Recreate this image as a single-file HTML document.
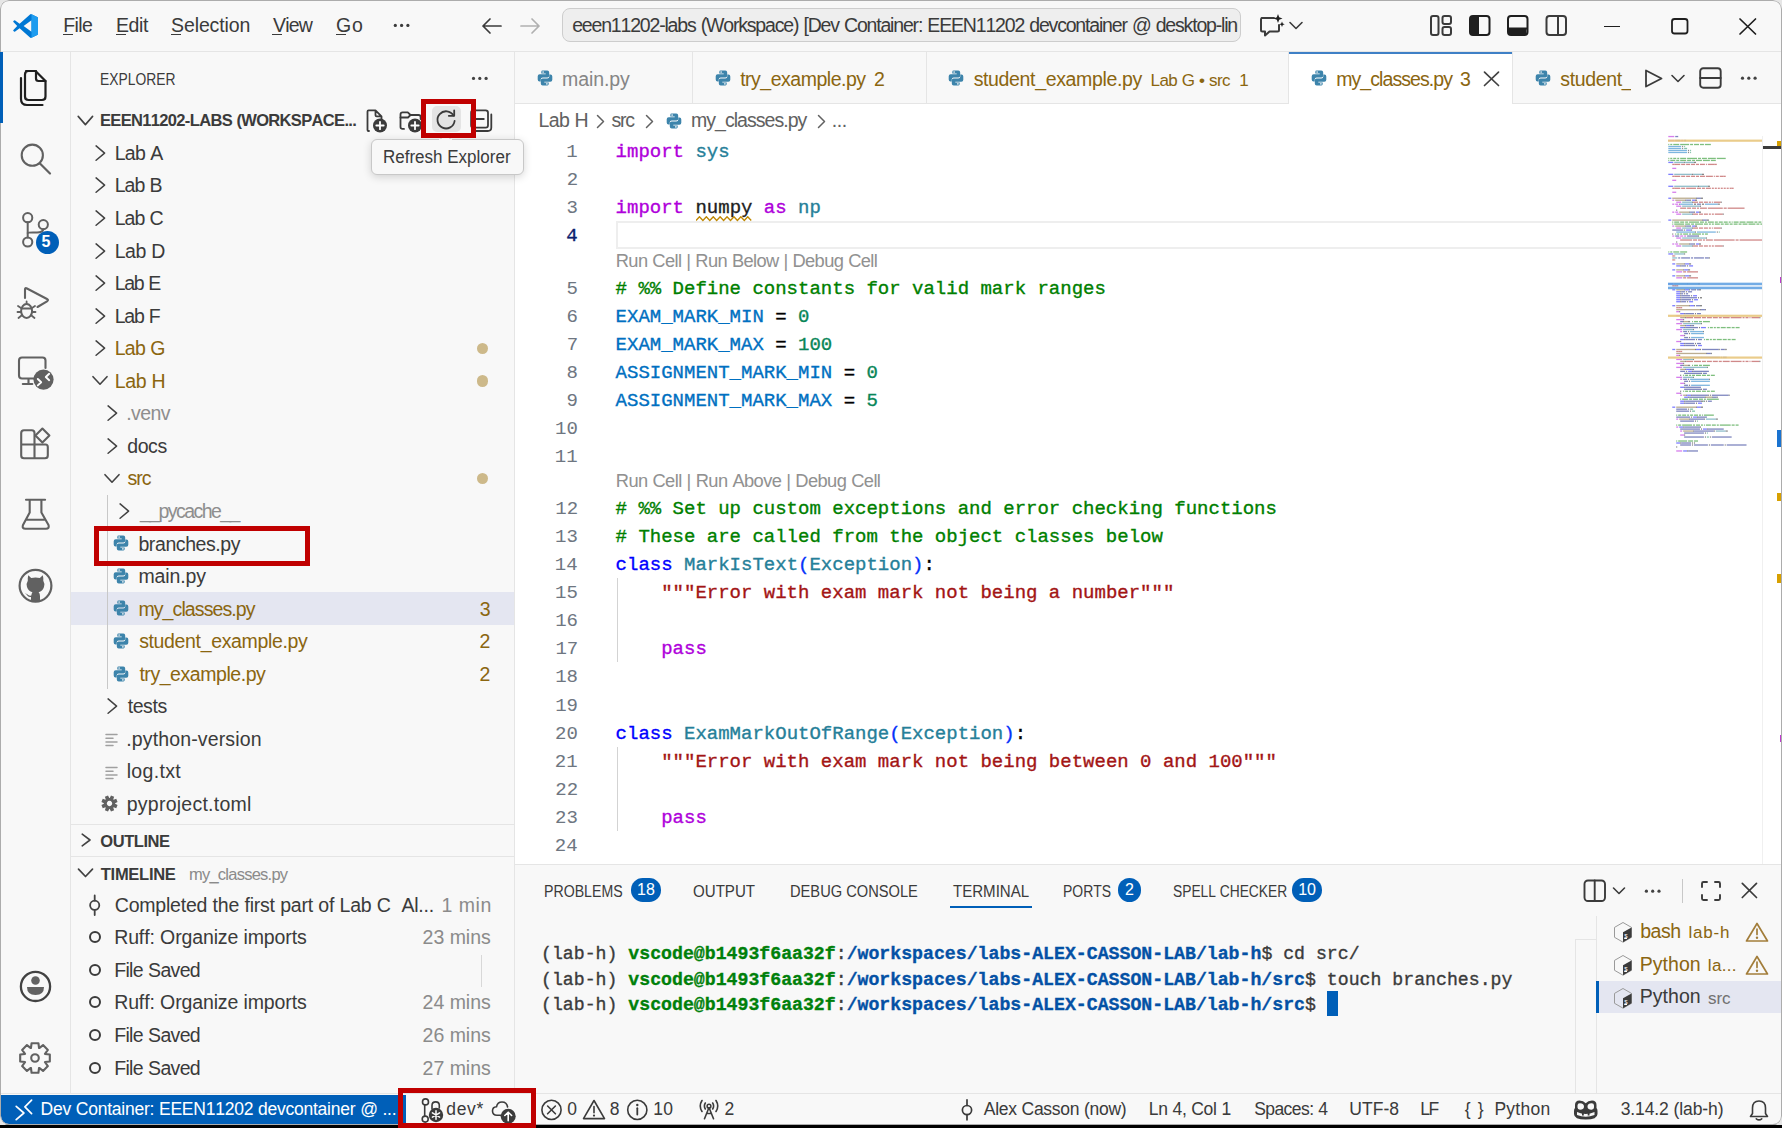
<!DOCTYPE html><html><head><meta charset="utf-8"><style>*{margin:0;padding:0}html,body{width:1782px;height:1128px;overflow:hidden;background:#f8f8f8}
body{position:relative;font-family:"Liberation Sans",sans-serif;font-kerning:none}
.r{position:absolute;display:block}
.t{position:absolute;white-space:pre}
.t{-webkit-text-stroke:0.04px currentColor}
.t.m{-webkit-text-stroke:0.35px currentColor}
</style></head><body><div class="r" style="left:0px;top:0px;width:1782px;height:1128px;background:#f8f8f8;"></div><div class="r" style="left:515px;top:104px;width:1267px;height:760px;background:#ffffff;"></div><div class="r" style="left:0px;top:51px;width:1782px;height:1px;background:#e5e5e5;"></div><div class="r" style="left:70px;top:52px;width:1px;height:1042px;background:#e5e5e5;"></div><div class="r" style="left:514px;top:52px;width:1px;height:1042px;background:#e5e5e5;"></div><div class="r" style="left:515px;top:103px;width:1267px;height:1px;background:#e5e5e5;"></div><div class="r" style="left:515px;top:864px;width:1267px;height:1px;background:#e5e5e5;"></div><div class="r" style="left:0px;top:1093px;width:1782px;height:1px;background:#e5e5e5;"></div><div class="t" style="left:63.20px;top:15.89px;font-size:19.5px;line-height:19.5px;color:#3b3b3b;letter-spacing:-0.585px;">File</div><div class="r" style="left:63.3px;top:33.6px;width:10px;height:1.2px;background:#3b3b3b;"></div><div class="t" style="left:116.00px;top:15.89px;font-size:19.5px;line-height:19.5px;color:#3b3b3b;letter-spacing:-0.420px;">Edit</div><div class="r" style="left:116.1px;top:33.6px;width:10px;height:1.2px;background:#3b3b3b;"></div><div class="t" style="left:171.11px;top:15.89px;font-size:19.5px;line-height:19.5px;color:#3b3b3b;letter-spacing:-0.133px;">Selection</div><div class="r" style="left:170.5px;top:33.6px;width:10px;height:1.2px;background:#3b3b3b;"></div><div class="t" style="left:272.91px;top:15.89px;font-size:19.5px;line-height:19.5px;color:#3b3b3b;letter-spacing:-0.743px;">View</div><div class="r" style="left:271.5px;top:33.6px;width:10px;height:1.2px;background:#3b3b3b;"></div><div class="t" style="left:336.02px;top:15.89px;font-size:19.5px;line-height:19.5px;color:#3b3b3b;letter-spacing:0.787px;">Go</div><div class="r" style="left:335.5px;top:33.6px;width:10px;height:1.2px;background:#3b3b3b;"></div><div class="r" style="left:562px;top:8.3px;width:679px;height:33.7px;background:#eeeeee;border:1px solid #cdcdcd;border-radius:8px;box-sizing:border-box;"></div><div class="r" style="left:563px;top:10px;width:675px;height:31px;overflow:hidden"><div class="t" style="left:9.17px;top:5.79px;font-size:19.5px;line-height:19.5px;color:#3b3b3b;letter-spacing:-1.179px;word-spacing:0.938px;">eeen11202-labs (Workspace) [Dev Container: EEEN11202 devcontainer @ desktop-linux]</div></div><div class="t" style="left:100.16px;top:70.83px;font-size:16.5px;line-height:16.5px;color:#3b3b3b;transform:scaleX(0.8388);transform-origin:0 0;">EXPLORER</div><div class="t" style="left:100.00px;top:112.13px;font-size:16.5px;line-height:16.5px;color:#3b3b3b;font-weight:700;letter-spacing:-0.660px;word-spacing:0.528px;">EEEN11202-LABS (WORKSPACE...</div><div class="r" style="left:71px;top:592.17px;width:443px;height:32.555px;background:#e4e6f1;"></div><div class="t" style="left:114.70px;top:143.89px;font-size:19.5px;line-height:19.5px;color:#3b3b3b;letter-spacing:-0.720px;word-spacing:0.557px;">Lab A</div><div class="t" style="left:114.70px;top:176.44px;font-size:19.5px;line-height:19.5px;color:#3b3b3b;letter-spacing:-0.940px;word-spacing:0.727px;">Lab B</div><div class="t" style="left:114.70px;top:209.00px;font-size:19.5px;line-height:19.5px;color:#3b3b3b;letter-spacing:-0.990px;word-spacing:0.766px;">Lab C</div><div class="t" style="left:114.70px;top:241.55px;font-size:19.5px;line-height:19.5px;color:#3b3b3b;letter-spacing:-0.435px;word-spacing:0.337px;">Lab D</div><div class="t" style="left:114.70px;top:274.11px;font-size:19.5px;line-height:19.5px;color:#3b3b3b;letter-spacing:-1.371px;word-spacing:1.061px;">Lab E</div><div class="t" style="left:114.70px;top:306.66px;font-size:19.5px;line-height:19.5px;color:#3b3b3b;letter-spacing:-1.173px;word-spacing:0.908px;">Lab F</div><div class="t" style="left:114.70px;top:339.22px;font-size:19.5px;line-height:19.5px;color:#8b6610;letter-spacing:-0.733px;word-spacing:0.567px;">Lab G</div><div class="t" style="left:114.70px;top:371.77px;font-size:19.5px;line-height:19.5px;color:#8b6610;letter-spacing:-0.355px;word-spacing:0.275px;">Lab H</div><div class="t" style="left:126.22px;top:404.33px;font-size:19.5px;line-height:19.5px;color:#8e8e8e;letter-spacing:-0.590px;">.venv</div><div class="t" style="left:127.18px;top:436.88px;font-size:19.5px;line-height:19.5px;color:#3b3b3b;letter-spacing:-0.389px;">docs</div><div class="t" style="left:127.46px;top:469.44px;font-size:19.5px;line-height:19.5px;color:#8b6610;letter-spacing:-1.018px;">src</div><div class="t" style="left:140.00px;top:501.99px;font-size:19.5px;line-height:19.5px;color:#8e8e8e;letter-spacing:-1.572px;">__pycache__</div><div class="t" style="left:138.44px;top:534.55px;font-size:19.5px;line-height:19.5px;color:#3b3b3b;letter-spacing:-0.414px;">branches.py</div><div class="t" style="left:138.41px;top:567.10px;font-size:19.5px;line-height:19.5px;color:#3b3b3b;letter-spacing:-0.124px;">main.py</div><div class="t" style="left:138.41px;top:599.66px;font-size:19.5px;line-height:19.5px;color:#8b6610;letter-spacing:-0.895px;">my_classes.py</div><div class="t" style="left:139.16px;top:632.21px;font-size:19.5px;line-height:19.5px;color:#8b6610;letter-spacing:-0.350px;">student_example.py</div><div class="t" style="left:139.40px;top:664.77px;font-size:19.5px;line-height:19.5px;color:#8b6610;letter-spacing:-0.446px;">try_example.py</div><div class="t" style="left:127.70px;top:697.32px;font-size:19.5px;line-height:19.5px;color:#3b3b3b;letter-spacing:-0.420px;">tests</div><div class="t" style="left:126.22px;top:729.88px;font-size:19.5px;line-height:19.5px;color:#3b3b3b;letter-spacing:0.145px;">.python-version</div><div class="t" style="left:126.69px;top:762.43px;font-size:19.5px;line-height:19.5px;color:#3b3b3b;letter-spacing:0.339px;">log.txt</div><div class="t" style="left:126.74px;top:794.99px;font-size:19.5px;line-height:19.5px;color:#3b3b3b;letter-spacing:0.245px;">pyproject.toml</div><div class="t" style="left:479.86px;top:599.66px;font-size:19.5px;line-height:19.5px;color:#8b6610;">3</div><div class="t" style="left:479.62px;top:632.21px;font-size:19.5px;line-height:19.5px;color:#8b6610;">2</div><div class="t" style="left:479.62px;top:664.77px;font-size:19.5px;line-height:19.5px;color:#8b6610;">2</div><div class="r" style="left:71px;top:824px;width:443px;height:1px;background:#e5e5e5;"></div><div class="r" style="left:71px;top:856px;width:443px;height:1px;background:#e5e5e5;"></div><div class="t" style="left:100.32px;top:833.03px;font-size:16.5px;line-height:16.5px;color:#3b3b3b;font-weight:700;letter-spacing:-0.449px;">OUTLINE</div><div class="t" style="left:100.81px;top:865.53px;font-size:16.5px;line-height:16.5px;color:#3b3b3b;font-weight:700;letter-spacing:-0.281px;">TIMELINE</div><div class="t" style="left:188.90px;top:865.53px;font-size:16.5px;line-height:16.5px;color:#8b8b8b;letter-spacing:-0.748px;">my_classes.py</div><div class="t" style="left:114.81px;top:895.79px;font-size:19.5px;line-height:19.5px;color:#3b3b3b;letter-spacing:-0.210px;word-spacing:0.164px;">Completed the first part of Lab C  Al...</div><div class="t" style="left:441.51px;top:895.79px;font-size:19.5px;line-height:19.5px;color:#8b8b8b;letter-spacing:0.517px;">1 min</div><div class="t" style="left:114.20px;top:928.34px;font-size:19.5px;line-height:19.5px;color:#3b3b3b;letter-spacing:-0.132px;word-spacing:0.105px;">Ruff: Organize imports</div><div class="t" style="left:422.62px;top:928.34px;font-size:19.5px;line-height:19.5px;color:#8b8b8b;letter-spacing:-0.037px;word-spacing:0.029px;">23 mins</div><div class="t" style="left:114.20px;top:960.89px;font-size:19.5px;line-height:19.5px;color:#3b3b3b;letter-spacing:-0.691px;word-spacing:0.549px;">File Saved</div><div class="t" style="left:114.20px;top:993.44px;font-size:19.5px;line-height:19.5px;color:#3b3b3b;letter-spacing:-0.132px;word-spacing:0.105px;">Ruff: Organize imports</div><div class="t" style="left:422.62px;top:993.44px;font-size:19.5px;line-height:19.5px;color:#8b8b8b;letter-spacing:-0.037px;word-spacing:0.029px;">24 mins</div><div class="t" style="left:114.20px;top:1025.99px;font-size:19.5px;line-height:19.5px;color:#3b3b3b;letter-spacing:-0.691px;word-spacing:0.549px;">File Saved</div><div class="t" style="left:422.62px;top:1025.99px;font-size:19.5px;line-height:19.5px;color:#8b8b8b;letter-spacing:-0.037px;word-spacing:0.029px;">26 mins</div><div class="t" style="left:114.20px;top:1058.54px;font-size:19.5px;line-height:19.5px;color:#3b3b3b;letter-spacing:-0.691px;word-spacing:0.549px;">File Saved</div><div class="t" style="left:422.62px;top:1058.54px;font-size:19.5px;line-height:19.5px;color:#8b8b8b;letter-spacing:-0.037px;word-spacing:0.029px;">27 mins</div><div class="r" style="left:692px;top:52px;width:1px;height:51px;background:#e5e5e5;"></div><div class="r" style="left:926px;top:52px;width:1px;height:51px;background:#e5e5e5;"></div><div class="r" style="left:1288px;top:52px;width:1px;height:51px;background:#e5e5e5;"></div><div class="r" style="left:1512px;top:52px;width:1px;height:51px;background:#e5e5e5;"></div><div class="r" style="left:1289px;top:52px;width:223px;height:52px;background:#ffffff;"></div><div class="r" style="left:1289px;top:52px;width:223px;height:2px;background:#3f80c6;"></div><div class="t" style="left:562.01px;top:69.99px;font-size:19.5px;line-height:19.5px;color:#868686;letter-spacing:-0.074px;">main.py</div><div class="t" style="left:740.20px;top:69.99px;font-size:19.5px;line-height:19.5px;color:#8b6610;letter-spacing:-0.492px;">try_example.py</div><div class="t" style="left:874.02px;top:69.99px;font-size:19.5px;line-height:19.5px;color:#8b6610;">2</div><div class="t" style="left:973.66px;top:69.99px;font-size:19.5px;line-height:19.5px;color:#8b6610;letter-spacing:-0.350px;">student_example.py</div><div class="t" style="left:1150.61px;top:72.11px;font-size:17px;line-height:17px;color:#8b6610;letter-spacing:-0.587px;word-spacing:0.449px;">Lab G • src</div><div class="t" style="left:1239.21px;top:72.11px;font-size:17px;line-height:17px;color:#8b6610;">1</div><div class="t" style="left:1336.21px;top:69.99px;font-size:19.5px;line-height:19.5px;color:#8b6610;letter-spacing:-0.920px;">my_classes.py</div><div class="t" style="left:1460.06px;top:69.99px;font-size:19.5px;line-height:19.5px;color:#8b6610;">3</div><div class="r" style="left:1513px;top:52px;width:117.6px;height:51px;overflow:hidden"><div class="t" style="left:47.36px;top:17.99px;font-size:19.5px;line-height:19.5px;color:#8b6610;letter-spacing:-0.350px;">student_example.py</div></div><div class="t" style="left:538.40px;top:111.09px;font-size:19.5px;line-height:19.5px;color:#616161;letter-spacing:-0.572px;word-spacing:0.443px;">Lab H</div><div class="t" style="left:611.46px;top:111.09px;font-size:19.5px;line-height:19.5px;color:#616161;letter-spacing:-1.268px;">src</div><div class="t" style="left:690.91px;top:111.09px;font-size:19.5px;line-height:19.5px;color:#616161;letter-spacing:-0.953px;">my_classes.py</div><div class="t" style="left:831.82px;top:111.09px;font-size:19.5px;line-height:19.5px;color:#616161;letter-spacing:-0.446px;">...</div><div class="r" style="left:615.9px;top:221.2px;width:1044.7px;height:27.6px;background:transparent;border:2.6px solid #eeeeee;border-right:none;box-sizing:border-box;"></div><div class="t" style="left:566.22px;top:143.14px;font-size:19.0px;line-height:19.0px;color:#6e7681;font-family:'Liberation Mono', monospace;">1</div><div class="t m" style="left:615.6px;top:143.14px;font-family:'Liberation Mono', monospace;font-size:19.0px;line-height:19.0px"><span style="color:#af00db">import</span><span style="color:#000000"> </span><span style="color:#267f99">sys</span></div><div class="t" style="left:566.64px;top:171.21px;font-size:19.0px;line-height:19.0px;color:#6e7681;font-family:'Liberation Mono', monospace;">2</div><div class="t" style="left:566.50px;top:199.28px;font-size:19.0px;line-height:19.0px;color:#6e7681;font-family:'Liberation Mono', monospace;">3</div><div class="t m" style="left:615.6px;top:199.28px;font-family:'Liberation Mono', monospace;font-size:19.0px;line-height:19.0px"><span style="color:#af00db">import</span><span style="color:#000000"> </span><span style="color:#1f1f1f">numpy</span><span style="color:#000000"> </span><span style="color:#af00db">as</span><span style="color:#000000"> </span><span style="color:#267f99">np</span></div><div class="t m" style="left:566.26px;top:227.35px;font-size:19.0px;line-height:19.0px;color:#0b216f;font-family:'Liberation Mono', monospace;">4</div><div class="t" style="left:566.50px;top:279.74px;font-size:19.0px;line-height:19.0px;color:#6e7681;font-family:'Liberation Mono', monospace;">5</div><div class="t m" style="left:615.6px;top:279.74px;font-family:'Liberation Mono', monospace;font-size:19.0px;line-height:19.0px"><span style="color:#008000"># %% Define constants for valid mark ranges</span></div><div class="t" style="left:566.53px;top:307.81px;font-size:19.0px;line-height:19.0px;color:#6e7681;font-family:'Liberation Mono', monospace;">6</div><div class="t m" style="left:615.6px;top:307.81px;font-family:'Liberation Mono', monospace;font-size:19.0px;line-height:19.0px"><span style="color:#0070c1">EXAM_MARK_MIN</span><span style="color:#000000"> = </span><span style="color:#098658">0</span></div><div class="t" style="left:566.78px;top:335.88px;font-size:19.0px;line-height:19.0px;color:#6e7681;font-family:'Liberation Mono', monospace;">7</div><div class="t m" style="left:615.6px;top:335.88px;font-family:'Liberation Mono', monospace;font-size:19.0px;line-height:19.0px"><span style="color:#0070c1">EXAM_MARK_MAX</span><span style="color:#000000"> = </span><span style="color:#098658">100</span></div><div class="t" style="left:566.55px;top:363.95px;font-size:19.0px;line-height:19.0px;color:#6e7681;font-family:'Liberation Mono', monospace;">8</div><div class="t m" style="left:615.6px;top:363.95px;font-family:'Liberation Mono', monospace;font-size:19.0px;line-height:19.0px"><span style="color:#0070c1">ASSIGNMENT_MARK_MIN</span><span style="color:#000000"> = </span><span style="color:#098658">0</span></div><div class="t" style="left:566.62px;top:392.02px;font-size:19.0px;line-height:19.0px;color:#6e7681;font-family:'Liberation Mono', monospace;">9</div><div class="t m" style="left:615.6px;top:392.02px;font-family:'Liberation Mono', monospace;font-size:19.0px;line-height:19.0px"><span style="color:#0070c1">ASSIGNMENT_MARK_MAX</span><span style="color:#000000"> = </span><span style="color:#098658">5</span></div><div class="t" style="left:555.07px;top:420.09px;font-size:19.0px;line-height:19.0px;color:#6e7681;font-family:'Liberation Mono', monospace;">10</div><div class="t" style="left:554.81px;top:448.16px;font-size:19.0px;line-height:19.0px;color:#6e7681;font-family:'Liberation Mono', monospace;">11</div><div class="t" style="left:555.24px;top:500.04px;font-size:19.0px;line-height:19.0px;color:#6e7681;font-family:'Liberation Mono', monospace;">12</div><div class="t m" style="left:615.6px;top:500.04px;font-family:'Liberation Mono', monospace;font-size:19.0px;line-height:19.0px"><span style="color:#008000"># %% Set up custom exceptions and error checking functions</span></div><div class="t" style="left:555.10px;top:528.11px;font-size:19.0px;line-height:19.0px;color:#6e7681;font-family:'Liberation Mono', monospace;">13</div><div class="t m" style="left:615.6px;top:528.11px;font-family:'Liberation Mono', monospace;font-size:19.0px;line-height:19.0px"><span style="color:#008000"># These are called from the object classes below</span></div><div class="t" style="left:554.86px;top:556.18px;font-size:19.0px;line-height:19.0px;color:#6e7681;font-family:'Liberation Mono', monospace;">14</div><div class="t m" style="left:615.6px;top:556.18px;font-family:'Liberation Mono', monospace;font-size:19.0px;line-height:19.0px"><span style="color:#0000ff">class</span><span style="color:#000000"> </span><span style="color:#267f99">MarkIsText</span><span style="color:#0431fa">(</span><span style="color:#267f99">Exception</span><span style="color:#0431fa">)</span><span style="color:#000000">:</span></div><div class="t" style="left:555.10px;top:584.25px;font-size:19.0px;line-height:19.0px;color:#6e7681;font-family:'Liberation Mono', monospace;">15</div><div class="t m" style="left:615.6px;top:584.25px;font-family:'Liberation Mono', monospace;font-size:19.0px;line-height:19.0px"><span style="color:#000000">    </span><span style="color:#a31515">"""Error with exam mark not being a number"""</span></div><div class="t" style="left:555.13px;top:612.32px;font-size:19.0px;line-height:19.0px;color:#6e7681;font-family:'Liberation Mono', monospace;">16</div><div class="t" style="left:555.38px;top:640.39px;font-size:19.0px;line-height:19.0px;color:#6e7681;font-family:'Liberation Mono', monospace;">17</div><div class="t m" style="left:615.6px;top:640.39px;font-family:'Liberation Mono', monospace;font-size:19.0px;line-height:19.0px"><span style="color:#000000">    </span><span style="color:#af00db">pass</span></div><div class="t" style="left:555.15px;top:668.46px;font-size:19.0px;line-height:19.0px;color:#6e7681;font-family:'Liberation Mono', monospace;">18</div><div class="t" style="left:555.21px;top:696.53px;font-size:19.0px;line-height:19.0px;color:#6e7681;font-family:'Liberation Mono', monospace;">19</div><div class="t" style="left:555.07px;top:724.60px;font-size:19.0px;line-height:19.0px;color:#6e7681;font-family:'Liberation Mono', monospace;">20</div><div class="t m" style="left:615.6px;top:724.60px;font-family:'Liberation Mono', monospace;font-size:19.0px;line-height:19.0px"><span style="color:#0000ff">class</span><span style="color:#000000"> </span><span style="color:#267f99">ExamMarkOutOfRange</span><span style="color:#0431fa">(</span><span style="color:#267f99">Exception</span><span style="color:#0431fa">)</span><span style="color:#000000">:</span></div><div class="t" style="left:554.81px;top:752.67px;font-size:19.0px;line-height:19.0px;color:#6e7681;font-family:'Liberation Mono', monospace;">21</div><div class="t m" style="left:615.6px;top:752.67px;font-family:'Liberation Mono', monospace;font-size:19.0px;line-height:19.0px"><span style="color:#000000">    </span><span style="color:#a31515">"""Error with exam mark not being between 0 and 100"""</span></div><div class="t" style="left:555.24px;top:780.74px;font-size:19.0px;line-height:19.0px;color:#6e7681;font-family:'Liberation Mono', monospace;">22</div><div class="t" style="left:555.10px;top:808.81px;font-size:19.0px;line-height:19.0px;color:#6e7681;font-family:'Liberation Mono', monospace;">23</div><div class="t m" style="left:615.6px;top:808.81px;font-family:'Liberation Mono', monospace;font-size:19.0px;line-height:19.0px"><span style="color:#000000">    </span><span style="color:#af00db">pass</span></div><div class="t" style="left:554.86px;top:836.88px;font-size:19.0px;line-height:19.0px;color:#6e7681;font-family:'Liberation Mono', monospace;">24</div><svg class="r" style="left:696.4px;top:216px;" width="56" height="6" viewBox="0 0 56 6"><path d="M0 4.5 L3.45 0.8 L6.90 4.5 L10.35 0.8 L13.80 4.5 L17.25 0.8 L20.70 4.5 L24.15 0.8 L27.60 4.5 L31.05 0.8 L34.50 4.5 L37.95 0.8 L41.40 4.5 L44.85 0.8 L48.30 4.5 L51.75 0.8 L55.20 4.5" fill="none" stroke="#bf8803" stroke-width="1.4"/></svg><div class="t" style="left:615.80px;top:252.01px;font-size:18.3px;line-height:18.3px;color:#919191;letter-spacing:-0.634px;word-spacing:0.494px;">Run Cell | Run Below | Debug Cell</div><div class="t" style="left:615.80px;top:472.21px;font-size:18.3px;line-height:18.3px;color:#919191;letter-spacing:-0.591px;word-spacing:0.461px;">Run Cell | Run Above | Debug Cell</div><div class="r" style="left:617px;top:578px;width:1px;height:84px;background:#d3d3d3;"></div><div class="r" style="left:617px;top:746.5px;width:1px;height:84px;background:#d3d3d3;"></div><div class="t" style="left:544.04px;top:882.73px;font-size:16.5px;line-height:16.5px;color:#3b3b3b;transform:scaleX(0.8573);transform-origin:0 0;">PROBLEMS</div><div class="t" style="left:693.28px;top:882.73px;font-size:16.5px;line-height:16.5px;color:#3b3b3b;transform:scaleX(0.9150);transform-origin:0 0;">OUTPUT</div><div class="t" style="left:789.80px;top:882.73px;font-size:16.5px;line-height:16.5px;color:#3b3b3b;transform:scaleX(0.8880);transform-origin:0 0;">DEBUG CONSOLE</div><div class="t" style="left:952.66px;top:882.73px;font-size:16.5px;line-height:16.5px;color:#3b3b3b;transform:scaleX(0.9126);transform-origin:0 0;">TERMINAL</div><div class="r" style="left:949.7px;top:905.5px;width:82px;height:2px;background:#005fb8;"></div><div class="t" style="left:1063.45px;top:882.73px;font-size:16.5px;line-height:16.5px;color:#3b3b3b;transform:scaleX(0.8460);transform-origin:0 0;">PORTS</div><div class="t" style="left:1172.87px;top:882.73px;font-size:16.5px;line-height:16.5px;color:#3b3b3b;transform:scaleX(0.8356);transform-origin:0 0;">SPELL CHECKER</div><div class="r" style="left:631px;top:878.3px;width:30.299999999999955px;height:23.40000000000009px;background:#005fb8;border-radius:11.700000000000045px"></div><div class="t" style="left:636.99px;top:882.05px;font-size:16px;line-height:16px;color:#ffffff;">18</div><div class="r" style="left:1117.7px;top:878.3px;width:23.5px;height:23.40000000000009px;background:#005fb8;border-radius:11.700000000000045px"></div><div class="t" style="left:1125.00px;top:882.05px;font-size:16px;line-height:16px;color:#ffffff;">2</div><div class="r" style="left:1292.2px;top:878.3px;width:30.299999999999955px;height:23.40000000000009px;background:#005fb8;border-radius:11.700000000000045px"></div><div class="t" style="left:1298.15px;top:882.05px;font-size:16px;line-height:16px;color:#ffffff;">10</div><div class="t m" style="left:541.0px;top:945.26px;font-family:'Liberation Mono', monospace;font-size:18.19px;line-height:18.19px"><span style="color:#3b3b3b;font-weight:400">(lab-h) </span><span style="color:#00800a;font-weight:700">vscode@b1493f6aa32f</span><span style="color:#3b3b3b;font-weight:400">:</span><span style="color:#0451a5;font-weight:700">/workspaces/labs-ALEX-CASSON-LAB/lab-h</span><span style="color:#3b3b3b;font-weight:400">$ cd src/</span></div><div class="t m" style="left:541.0px;top:970.51px;font-family:'Liberation Mono', monospace;font-size:18.19px;line-height:18.19px"><span style="color:#3b3b3b;font-weight:400">(lab-h) </span><span style="color:#00800a;font-weight:700">vscode@b1493f6aa32f</span><span style="color:#3b3b3b;font-weight:400">:</span><span style="color:#0451a5;font-weight:700">/workspaces/labs-ALEX-CASSON-LAB/lab-h/src</span><span style="color:#3b3b3b;font-weight:400">$ touch branches.py</span></div><div class="t m" style="left:541.0px;top:995.76px;font-family:'Liberation Mono', monospace;font-size:18.19px;line-height:18.19px"><span style="color:#3b3b3b;font-weight:400">(lab-h) </span><span style="color:#00800a;font-weight:700">vscode@b1493f6aa32f</span><span style="color:#3b3b3b;font-weight:400">:</span><span style="color:#0451a5;font-weight:700">/workspaces/labs-ALEX-CASSON-LAB/lab-h/src</span><span style="color:#3b3b3b;font-weight:400">$ </span></div><div class="r" style="left:1326.9px;top:991px;width:10.8px;height:25px;background:#005fb8;"></div><div class="r" style="left:1595.5px;top:915.8px;width:1px;height:178px;background:#e5e5e5;"></div><div class="r" style="left:1575px;top:939px;width:1px;height:155px;background:#e5e5e5;"></div><div class="r" style="left:1575px;top:939px;width:21px;height:1px;background:#e5e5e5;"></div><div class="r" style="left:1596px;top:980.6px;width:186px;height:32.4px;background:#e4e6f1;"></div><div class="r" style="left:1596px;top:980.6px;width:2.5px;height:32.4px;background:#005fb8;"></div><div class="t" style="left:1640.14px;top:921.89px;font-size:19.5px;line-height:19.5px;color:#8b6610;letter-spacing:-0.454px;">bash</div><div class="t" style="left:1688.45px;top:924.01px;font-size:17px;line-height:17px;color:#8b6610;letter-spacing:0.787px;">lab-h</div><div class="t" style="left:1639.80px;top:954.99px;font-size:19.5px;line-height:19.5px;color:#8b6610;letter-spacing:0.031px;">Python</div><div class="t" style="left:1707.85px;top:957.11px;font-size:17px;line-height:17px;color:#8b6610;letter-spacing:0.324px;">la...</div><div class="t" style="left:1639.80px;top:987.49px;font-size:19.5px;line-height:19.5px;color:#3b3b3b;letter-spacing:0.031px;">Python</div><div class="t" style="left:1708.03px;top:989.61px;font-size:17px;line-height:17px;color:#717171;letter-spacing:-0.120px;">src</div><div class="r" style="left:1px;top:1094.6px;width:405px;height:29.4px;background:#005fb8;border-bottom-left-radius:8px;"></div><div class="t" style="left:40.56px;top:1100.98px;font-size:17.5px;line-height:17.5px;color:#ffffff;letter-spacing:-0.237px;word-spacing:0.188px;">Dev Container: EEEN11202 devcontainer @ ...</div><div class="t" style="left:446.27px;top:1100.98px;font-size:17.5px;line-height:17.5px;color:#3b3b3b;letter-spacing:0.661px;">dev*</div><div class="t" style="left:567.32px;top:1100.98px;font-size:17.5px;line-height:17.5px;color:#3b3b3b;">0</div><div class="t" style="left:609.84px;top:1100.98px;font-size:17.5px;line-height:17.5px;color:#3b3b3b;">8</div><div class="t" style="left:653.27px;top:1100.98px;font-size:17.5px;line-height:17.5px;color:#3b3b3b;letter-spacing:0.251px;">10</div><div class="t" style="left:724.52px;top:1100.98px;font-size:17.5px;line-height:17.5px;color:#3b3b3b;">2</div><div class="t" style="left:983.87px;top:1100.98px;font-size:17.5px;line-height:17.5px;color:#3b3b3b;letter-spacing:-0.287px;word-spacing:0.228px;">Alex Casson (now)</div><div class="t" style="left:1148.86px;top:1100.98px;font-size:17.5px;line-height:17.5px;color:#3b3b3b;letter-spacing:-0.305px;word-spacing:0.233px;">Ln 4, Col 1</div><div class="t" style="left:1254.21px;top:1100.98px;font-size:17.5px;line-height:17.5px;color:#3b3b3b;letter-spacing:-0.572px;word-spacing:0.453px;">Spaces: 4</div><div class="t" style="left:1349.35px;top:1100.98px;font-size:17.5px;line-height:17.5px;color:#3b3b3b;letter-spacing:0.008px;">UTF-8</div><div class="t" style="left:1420.16px;top:1100.98px;font-size:17.5px;line-height:17.5px;color:#3b3b3b;letter-spacing:-1.286px;">LF</div><div class="t" style="left:1464.71px;top:1100.98px;font-size:17.5px;line-height:17.5px;color:#3b3b3b;letter-spacing:1.128px;">{ }</div><div class="t" style="left:1494.46px;top:1100.98px;font-size:17.5px;line-height:17.5px;color:#3b3b3b;letter-spacing:0.238px;">Python</div><div class="t" style="left:1620.63px;top:1100.98px;font-size:17.5px;line-height:17.5px;color:#3b3b3b;letter-spacing:-0.093px;word-spacing:0.074px;">3.14.2 (lab-h)</div><div class="r" style="left:1762px;top:136px;width:19px;height:728px;background:#ffffff;border-left:1px solid #f0f0f0;box-sizing:border-box;"></div><svg class="r" style="left:1660px;top:130px" width="102" height="330" viewBox="0 0 102 330"><g opacity="0.5"><rect x="8.30" y="5.90" width="5.94" height="1.3" fill="#af00db"/><rect x="15.23" y="5.90" width="2.97" height="1.3" fill="#001080"/><rect x="8.30" y="9.88" width="5.94" height="1.3" fill="#af00db"/><rect x="15.23" y="9.88" width="4.95" height="1.3" fill="#001080"/><rect x="21.17" y="9.88" width="1.98" height="1.3" fill="#af00db"/><rect x="24.14" y="9.88" width="1.98" height="1.3" fill="#001080"/><rect x="8.30" y="13.86" width="0.99" height="1.3" fill="#008000"/><rect x="10.28" y="13.86" width="1.98" height="1.3" fill="#008000"/><rect x="13.25" y="13.86" width="5.94" height="1.3" fill="#008000"/><rect x="20.18" y="13.86" width="8.91" height="1.3" fill="#008000"/><rect x="30.08" y="13.86" width="2.97" height="1.3" fill="#008000"/><rect x="34.04" y="13.86" width="4.95" height="1.3" fill="#008000"/><rect x="39.98" y="13.86" width="3.96" height="1.3" fill="#008000"/><rect x="44.93" y="13.86" width="5.94" height="1.3" fill="#008000"/><rect x="8.30" y="15.85" width="12.87" height="1.3" fill="#0070c1"/><rect x="22.16" y="15.85" width="0.99" height="1.3" fill="#000000"/><rect x="24.14" y="15.85" width="0.99" height="1.3" fill="#098658"/><rect x="8.30" y="17.84" width="12.87" height="1.3" fill="#0070c1"/><rect x="22.16" y="17.84" width="0.99" height="1.3" fill="#000000"/><rect x="24.14" y="17.84" width="2.97" height="1.3" fill="#098658"/><rect x="8.30" y="19.83" width="18.81" height="1.3" fill="#0070c1"/><rect x="28.10" y="19.83" width="0.99" height="1.3" fill="#000000"/><rect x="30.08" y="19.83" width="0.99" height="1.3" fill="#098658"/><rect x="8.30" y="21.82" width="18.81" height="1.3" fill="#0070c1"/><rect x="28.10" y="21.82" width="0.99" height="1.3" fill="#000000"/><rect x="30.08" y="21.82" width="0.99" height="1.3" fill="#098658"/><rect x="8.30" y="27.79" width="0.99" height="1.3" fill="#008000"/><rect x="10.28" y="27.79" width="1.98" height="1.3" fill="#008000"/><rect x="13.25" y="27.79" width="2.97" height="1.3" fill="#008000"/><rect x="17.21" y="27.79" width="1.98" height="1.3" fill="#008000"/><rect x="20.18" y="27.79" width="5.94" height="1.3" fill="#008000"/><rect x="27.11" y="27.79" width="9.90" height="1.3" fill="#008000"/><rect x="38.00" y="27.79" width="2.97" height="1.3" fill="#008000"/><rect x="41.96" y="27.79" width="4.95" height="1.3" fill="#008000"/><rect x="47.90" y="27.79" width="7.92" height="1.3" fill="#008000"/><rect x="56.81" y="27.79" width="8.91" height="1.3" fill="#008000"/><rect x="8.30" y="29.78" width="0.99" height="1.3" fill="#008000"/><rect x="10.28" y="29.78" width="4.95" height="1.3" fill="#008000"/><rect x="16.22" y="29.78" width="2.97" height="1.3" fill="#008000"/><rect x="20.18" y="29.78" width="5.94" height="1.3" fill="#008000"/><rect x="27.11" y="29.78" width="3.96" height="1.3" fill="#008000"/><rect x="32.06" y="29.78" width="2.97" height="1.3" fill="#008000"/><rect x="36.02" y="29.78" width="5.94" height="1.3" fill="#008000"/><rect x="42.95" y="29.78" width="6.93" height="1.3" fill="#008000"/><rect x="50.87" y="29.78" width="4.95" height="1.3" fill="#008000"/><rect x="8.30" y="31.77" width="4.95" height="1.3" fill="#0000ff"/><rect x="14.24" y="31.77" width="9.90" height="1.3" fill="#267f99"/><rect x="24.14" y="31.77" width="0.99" height="1.3" fill="#000000"/><rect x="25.13" y="31.77" width="8.91" height="1.3" fill="#267f99"/><rect x="34.04" y="31.77" width="0.99" height="1.3" fill="#000000"/><rect x="35.03" y="31.77" width="0.99" height="1.3" fill="#000000"/><rect x="12.26" y="33.76" width="1.98" height="1.3" fill="#a31515"/><rect x="14.24" y="33.76" width="5.94" height="1.3" fill="#a31515"/><rect x="21.17" y="33.76" width="3.96" height="1.3" fill="#a31515"/><rect x="26.12" y="33.76" width="3.96" height="1.3" fill="#a31515"/><rect x="31.07" y="33.76" width="3.96" height="1.3" fill="#a31515"/><rect x="36.02" y="33.76" width="2.97" height="1.3" fill="#a31515"/><rect x="39.98" y="33.76" width="4.95" height="1.3" fill="#a31515"/><rect x="45.92" y="33.76" width="0.99" height="1.3" fill="#a31515"/><rect x="47.90" y="33.76" width="6.93" height="1.3" fill="#a31515"/><rect x="54.83" y="33.76" width="1.98" height="1.3" fill="#a31515"/><rect x="12.26" y="37.74" width="3.96" height="1.3" fill="#af00db"/><rect x="8.30" y="43.71" width="4.95" height="1.3" fill="#0000ff"/><rect x="14.24" y="43.71" width="17.82" height="1.3" fill="#267f99"/><rect x="32.06" y="43.71" width="0.99" height="1.3" fill="#000000"/><rect x="33.05" y="43.71" width="8.91" height="1.3" fill="#267f99"/><rect x="41.96" y="43.71" width="0.99" height="1.3" fill="#000000"/><rect x="42.95" y="43.71" width="0.99" height="1.3" fill="#000000"/><rect x="12.26" y="45.70" width="1.98" height="1.3" fill="#a31515"/><rect x="14.24" y="45.70" width="5.94" height="1.3" fill="#a31515"/><rect x="21.17" y="45.70" width="3.96" height="1.3" fill="#a31515"/><rect x="26.12" y="45.70" width="3.96" height="1.3" fill="#a31515"/><rect x="31.07" y="45.70" width="3.96" height="1.3" fill="#a31515"/><rect x="36.02" y="45.70" width="2.97" height="1.3" fill="#a31515"/><rect x="39.98" y="45.70" width="4.95" height="1.3" fill="#a31515"/><rect x="45.92" y="45.70" width="6.93" height="1.3" fill="#a31515"/><rect x="53.84" y="45.70" width="0.99" height="1.3" fill="#a31515"/><rect x="55.82" y="45.70" width="2.97" height="1.3" fill="#a31515"/><rect x="59.78" y="45.70" width="3.96" height="1.3" fill="#a31515"/><rect x="63.74" y="45.70" width="1.98" height="1.3" fill="#a31515"/><rect x="12.26" y="49.68" width="3.96" height="1.3" fill="#af00db"/><rect x="8.30" y="55.65" width="4.95" height="1.3" fill="#0000ff"/><rect x="14.24" y="55.65" width="23.76" height="1.3" fill="#267f99"/><rect x="38.00" y="55.65" width="0.99" height="1.3" fill="#000000"/><rect x="38.99" y="55.65" width="8.91" height="1.3" fill="#267f99"/><rect x="47.90" y="55.65" width="0.99" height="1.3" fill="#000000"/><rect x="48.89" y="55.65" width="0.99" height="1.3" fill="#000000"/><rect x="12.26" y="57.64" width="1.98" height="1.3" fill="#a31515"/><rect x="14.24" y="57.64" width="5.94" height="1.3" fill="#a31515"/><rect x="21.17" y="57.64" width="3.96" height="1.3" fill="#a31515"/><rect x="26.12" y="57.64" width="9.90" height="1.3" fill="#a31515"/><rect x="37.01" y="57.64" width="3.96" height="1.3" fill="#a31515"/><rect x="41.96" y="57.64" width="2.97" height="1.3" fill="#a31515"/><rect x="45.92" y="57.64" width="4.95" height="1.3" fill="#a31515"/><rect x="51.86" y="57.64" width="1.98" height="1.3" fill="#a31515"/><rect x="54.83" y="57.64" width="1.98" height="1.3" fill="#a31515"/><rect x="57.80" y="57.64" width="1.98" height="1.3" fill="#a31515"/><rect x="60.77" y="57.64" width="1.98" height="1.3" fill="#a31515"/><rect x="63.74" y="57.64" width="1.98" height="1.3" fill="#a31515"/><rect x="66.71" y="57.64" width="1.98" height="1.3" fill="#a31515"/><rect x="69.68" y="57.64" width="1.98" height="1.3" fill="#a31515"/><rect x="71.66" y="57.64" width="1.98" height="1.3" fill="#a31515"/><rect x="12.26" y="61.62" width="3.96" height="1.3" fill="#af00db"/><rect x="8.30" y="67.59" width="2.97" height="1.3" fill="#0000ff"/><rect x="12.26" y="67.59" width="23.76" height="1.3" fill="#795e26"/><rect x="36.02" y="67.59" width="0.99" height="1.3" fill="#000000"/><rect x="37.01" y="67.59" width="3.96" height="1.3" fill="#001080"/><rect x="40.97" y="67.59" width="0.99" height="1.3" fill="#000000"/><rect x="41.96" y="67.59" width="0.99" height="1.3" fill="#000000"/><rect x="12.26" y="69.58" width="1.98" height="1.3" fill="#af00db"/><rect x="15.23" y="69.58" width="9.90" height="1.3" fill="#795e26"/><rect x="25.13" y="69.58" width="0.99" height="1.3" fill="#000000"/><rect x="26.12" y="69.58" width="3.96" height="1.3" fill="#001080"/><rect x="30.08" y="69.58" width="0.99" height="1.3" fill="#000000"/><rect x="32.06" y="69.58" width="2.97" height="1.3" fill="#0000ff"/><rect x="35.03" y="69.58" width="0.99" height="1.3" fill="#000000"/><rect x="36.02" y="69.58" width="0.99" height="1.3" fill="#000000"/><rect x="16.22" y="71.57" width="4.95" height="1.3" fill="#af00db"/><rect x="22.16" y="71.57" width="9.90" height="1.3" fill="#267f99"/><rect x="32.06" y="71.57" width="0.99" height="1.3" fill="#000000"/><rect x="33.05" y="71.57" width="4.95" height="1.3" fill="#a31515"/><rect x="38.99" y="71.57" width="3.96" height="1.3" fill="#a31515"/><rect x="43.94" y="71.57" width="3.96" height="1.3" fill="#a31515"/><rect x="48.89" y="71.57" width="1.98" height="1.3" fill="#a31515"/><rect x="51.86" y="71.57" width="0.99" height="1.3" fill="#a31515"/><rect x="53.84" y="71.57" width="6.93" height="1.3" fill="#a31515"/><rect x="60.77" y="71.57" width="0.99" height="1.3" fill="#000000"/><rect x="12.26" y="73.56" width="1.98" height="1.3" fill="#af00db"/><rect x="15.23" y="73.56" width="2.97" height="1.3" fill="#af00db"/><rect x="19.19" y="73.56" width="0.99" height="1.3" fill="#000000"/><rect x="20.18" y="73.56" width="12.87" height="1.3" fill="#0070c1"/><rect x="34.04" y="73.56" width="0.99" height="1.3" fill="#000000"/><rect x="35.03" y="73.56" width="0.99" height="1.3" fill="#000000"/><rect x="37.01" y="73.56" width="3.96" height="1.3" fill="#001080"/><rect x="41.96" y="73.56" width="0.99" height="1.3" fill="#000000"/><rect x="42.95" y="73.56" width="0.99" height="1.3" fill="#000000"/><rect x="44.93" y="73.56" width="12.87" height="1.3" fill="#0070c1"/><rect x="57.80" y="73.56" width="0.99" height="1.3" fill="#000000"/><rect x="58.79" y="73.56" width="0.99" height="1.3" fill="#000000"/><rect x="16.22" y="75.55" width="4.95" height="1.3" fill="#af00db"/><rect x="22.16" y="75.55" width="17.82" height="1.3" fill="#267f99"/><rect x="39.98" y="75.55" width="0.99" height="1.3" fill="#000000"/><rect x="20.18" y="77.54" width="5.94" height="1.3" fill="#a31515"/><rect x="27.11" y="77.54" width="3.96" height="1.3" fill="#a31515"/><rect x="32.06" y="77.54" width="3.96" height="1.3" fill="#a31515"/><rect x="37.01" y="77.54" width="1.98" height="1.3" fill="#a31515"/><rect x="39.98" y="77.54" width="6.93" height="1.3" fill="#a31515"/><rect x="47.90" y="77.54" width="14.85" height="1.3" fill="#a31515"/><rect x="63.74" y="77.54" width="2.97" height="1.3" fill="#a31515"/><rect x="67.70" y="77.54" width="16.83" height="1.3" fill="#a31515"/><rect x="16.22" y="79.53" width="0.99" height="1.3" fill="#000000"/><rect x="12.26" y="81.52" width="1.98" height="1.3" fill="#af00db"/><rect x="15.23" y="81.52" width="2.97" height="1.3" fill="#af00db"/><rect x="19.19" y="81.52" width="9.90" height="1.3" fill="#795e26"/><rect x="29.09" y="81.52" width="0.99" height="1.3" fill="#000000"/><rect x="30.08" y="81.52" width="3.96" height="1.3" fill="#001080"/><rect x="34.04" y="81.52" width="0.99" height="1.3" fill="#000000"/><rect x="36.02" y="81.52" width="2.97" height="1.3" fill="#0000ff"/><rect x="38.99" y="81.52" width="0.99" height="1.3" fill="#000000"/><rect x="39.98" y="81.52" width="0.99" height="1.3" fill="#000000"/><rect x="16.22" y="83.51" width="4.95" height="1.3" fill="#af00db"/><rect x="22.16" y="83.51" width="9.90" height="1.3" fill="#267f99"/><rect x="32.06" y="83.51" width="0.99" height="1.3" fill="#000000"/><rect x="33.05" y="83.51" width="4.95" height="1.3" fill="#a31515"/><rect x="38.99" y="83.51" width="3.96" height="1.3" fill="#a31515"/><rect x="43.94" y="83.51" width="3.96" height="1.3" fill="#a31515"/><rect x="48.89" y="83.51" width="1.98" height="1.3" fill="#a31515"/><rect x="51.86" y="83.51" width="1.98" height="1.3" fill="#a31515"/><rect x="54.83" y="83.51" width="7.92" height="1.3" fill="#a31515"/><rect x="62.75" y="83.51" width="0.99" height="1.3" fill="#000000"/><rect x="8.30" y="89.48" width="2.97" height="1.3" fill="#0000ff"/><rect x="12.26" y="89.48" width="29.70" height="1.3" fill="#795e26"/><rect x="41.96" y="89.48" width="0.99" height="1.3" fill="#000000"/><rect x="42.95" y="89.48" width="3.96" height="1.3" fill="#001080"/><rect x="46.91" y="89.48" width="0.99" height="1.3" fill="#000000"/><rect x="47.90" y="89.48" width="0.99" height="1.3" fill="#000000"/><rect x="12.26" y="91.47" width="0.99" height="1.3" fill="#008000"/><rect x="14.24" y="91.47" width="4.95" height="1.3" fill="#008000"/><rect x="20.18" y="91.47" width="3.96" height="1.3" fill="#008000"/><rect x="25.13" y="91.47" width="2.97" height="1.3" fill="#008000"/><rect x="29.09" y="91.47" width="9.90" height="1.3" fill="#008000"/><rect x="39.98" y="91.47" width="3.96" height="1.3" fill="#008000"/><rect x="44.93" y="91.47" width="1.98" height="1.3" fill="#008000"/><rect x="47.90" y="91.47" width="5.94" height="1.3" fill="#008000"/><rect x="54.83" y="91.47" width="2.97" height="1.3" fill="#008000"/><rect x="58.79" y="91.47" width="3.96" height="1.3" fill="#008000"/><rect x="63.74" y="91.47" width="3.96" height="1.3" fill="#008000"/><rect x="68.69" y="91.47" width="1.98" height="1.3" fill="#008000"/><rect x="71.66" y="91.47" width="0.99" height="1.3" fill="#008000"/><rect x="73.64" y="91.47" width="4.95" height="1.3" fill="#008000"/><rect x="79.58" y="91.47" width="5.94" height="1.3" fill="#008000"/><rect x="86.51" y="91.47" width="6.93" height="1.3" fill="#008000"/><rect x="94.43" y="91.47" width="2.97" height="1.3" fill="#008000"/><rect x="98.39" y="91.47" width="2.97" height="1.3" fill="#008000"/><rect x="102.35" y="91.47" width="2.97" height="1.3" fill="#008000"/><rect x="106.31" y="91.47" width="4.95" height="1.3" fill="#008000"/><rect x="12.26" y="93.46" width="0.99" height="1.3" fill="#008000"/><rect x="14.24" y="93.46" width="9.90" height="1.3" fill="#008000"/><rect x="25.13" y="93.46" width="4.95" height="1.3" fill="#008000"/><rect x="31.07" y="93.46" width="2.97" height="1.3" fill="#008000"/><rect x="35.03" y="93.46" width="7.92" height="1.3" fill="#008000"/><rect x="43.94" y="93.46" width="3.96" height="1.3" fill="#008000"/><rect x="48.89" y="93.46" width="1.98" height="1.3" fill="#008000"/><rect x="51.86" y="93.46" width="1.98" height="1.3" fill="#008000"/><rect x="54.83" y="93.46" width="4.95" height="1.3" fill="#008000"/><rect x="60.77" y="93.46" width="2.97" height="1.3" fill="#008000"/><rect x="64.73" y="93.46" width="3.96" height="1.3" fill="#008000"/><rect x="69.68" y="93.46" width="2.97" height="1.3" fill="#008000"/><rect x="73.64" y="93.46" width="3.96" height="1.3" fill="#008000"/><rect x="78.59" y="93.46" width="2.97" height="1.3" fill="#008000"/><rect x="82.55" y="93.46" width="4.95" height="1.3" fill="#008000"/><rect x="88.49" y="93.46" width="6.93" height="1.3" fill="#008000"/><rect x="96.41" y="93.46" width="2.97" height="1.3" fill="#008000"/><rect x="100.37" y="93.46" width="4.95" height="1.3" fill="#008000"/><rect x="106.31" y="93.46" width="3.96" height="1.3" fill="#008000"/><rect x="12.26" y="95.45" width="1.98" height="1.3" fill="#af00db"/><rect x="15.23" y="95.45" width="9.90" height="1.3" fill="#795e26"/><rect x="25.13" y="95.45" width="0.99" height="1.3" fill="#000000"/><rect x="26.12" y="95.45" width="3.96" height="1.3" fill="#001080"/><rect x="30.08" y="95.45" width="0.99" height="1.3" fill="#000000"/><rect x="32.06" y="95.45" width="2.97" height="1.3" fill="#0000ff"/><rect x="35.03" y="95.45" width="0.99" height="1.3" fill="#000000"/><rect x="36.02" y="95.45" width="0.99" height="1.3" fill="#000000"/><rect x="16.22" y="97.44" width="4.95" height="1.3" fill="#af00db"/><rect x="22.16" y="97.44" width="9.90" height="1.3" fill="#267f99"/><rect x="32.06" y="97.44" width="0.99" height="1.3" fill="#000000"/><rect x="33.05" y="97.44" width="4.95" height="1.3" fill="#a31515"/><rect x="38.99" y="97.44" width="3.96" height="1.3" fill="#a31515"/><rect x="43.94" y="97.44" width="3.96" height="1.3" fill="#a31515"/><rect x="48.89" y="97.44" width="1.98" height="1.3" fill="#a31515"/><rect x="51.86" y="97.44" width="0.99" height="1.3" fill="#a31515"/><rect x="53.84" y="97.44" width="6.93" height="1.3" fill="#a31515"/><rect x="60.77" y="97.44" width="0.99" height="1.3" fill="#000000"/><rect x="12.26" y="99.43" width="10.89" height="1.3" fill="#001080"/><rect x="24.14" y="99.43" width="0.99" height="1.3" fill="#000000"/><rect x="26.12" y="99.43" width="4.95" height="1.3" fill="#0000ff"/><rect x="31.07" y="99.43" width="0.99" height="1.3" fill="#000000"/><rect x="16.22" y="101.42" width="18.81" height="1.3" fill="#0070c1"/><rect x="35.03" y="101.42" width="0.99" height="1.3" fill="#000000"/><rect x="37.01" y="101.42" width="18.81" height="1.3" fill="#0070c1"/><rect x="56.81" y="101.42" width="0.99" height="1.3" fill="#000000"/><rect x="58.79" y="101.42" width="0.99" height="1.3" fill="#098658"/><rect x="12.26" y="103.41" width="0.99" height="1.3" fill="#000000"/><rect x="15.23" y="103.41" width="0.99" height="1.3" fill="#008000"/><rect x="17.21" y="103.41" width="1.98" height="1.3" fill="#008000"/><rect x="20.18" y="103.41" width="1.98" height="1.3" fill="#008000"/><rect x="23.15" y="103.41" width="4.95" height="1.3" fill="#008000"/><rect x="29.09" y="103.41" width="1.98" height="1.3" fill="#008000"/><rect x="32.06" y="103.41" width="8.91" height="1.3" fill="#008000"/><rect x="41.96" y="103.41" width="1.98" height="1.3" fill="#008000"/><rect x="44.93" y="103.41" width="2.97" height="1.3" fill="#008000"/><rect x="12.26" y="105.40" width="1.98" height="1.3" fill="#af00db"/><rect x="15.23" y="105.40" width="3.96" height="1.3" fill="#001080"/><rect x="20.18" y="105.40" width="2.97" height="1.3" fill="#af00db"/><rect x="24.14" y="105.40" width="1.98" height="1.3" fill="#af00db"/><rect x="27.11" y="105.40" width="10.89" height="1.3" fill="#001080"/><rect x="38.00" y="105.40" width="0.99" height="1.3" fill="#000000"/><rect x="16.22" y="107.39" width="4.95" height="1.3" fill="#af00db"/><rect x="22.16" y="107.39" width="23.76" height="1.3" fill="#267f99"/><rect x="45.92" y="107.39" width="0.99" height="1.3" fill="#000000"/><rect x="20.18" y="109.38" width="11.88" height="1.3" fill="#a31515"/><rect x="33.05" y="109.38" width="3.96" height="1.3" fill="#a31515"/><rect x="38.00" y="109.38" width="3.96" height="1.3" fill="#a31515"/><rect x="42.95" y="109.38" width="1.98" height="1.3" fill="#a31515"/><rect x="45.92" y="109.38" width="6.93" height="1.3" fill="#a31515"/><rect x="53.84" y="109.38" width="20.79" height="1.3" fill="#a31515"/><rect x="75.62" y="109.38" width="2.97" height="1.3" fill="#a31515"/><rect x="79.58" y="109.38" width="22.77" height="1.3" fill="#a31515"/><rect x="16.22" y="111.37" width="0.99" height="1.3" fill="#000000"/><rect x="12.26" y="113.36" width="1.98" height="1.3" fill="#af00db"/><rect x="15.23" y="113.36" width="2.97" height="1.3" fill="#af00db"/><rect x="19.19" y="113.36" width="9.90" height="1.3" fill="#795e26"/><rect x="29.09" y="113.36" width="0.99" height="1.3" fill="#000000"/><rect x="30.08" y="113.36" width="3.96" height="1.3" fill="#001080"/><rect x="34.04" y="113.36" width="0.99" height="1.3" fill="#000000"/><rect x="36.02" y="113.36" width="2.97" height="1.3" fill="#0000ff"/><rect x="38.99" y="113.36" width="0.99" height="1.3" fill="#000000"/><rect x="39.98" y="113.36" width="0.99" height="1.3" fill="#000000"/><rect x="16.22" y="115.35" width="4.95" height="1.3" fill="#af00db"/><rect x="22.16" y="115.35" width="9.90" height="1.3" fill="#267f99"/><rect x="32.06" y="115.35" width="0.99" height="1.3" fill="#000000"/><rect x="33.05" y="115.35" width="4.95" height="1.3" fill="#a31515"/><rect x="38.99" y="115.35" width="3.96" height="1.3" fill="#a31515"/><rect x="43.94" y="115.35" width="3.96" height="1.3" fill="#a31515"/><rect x="48.89" y="115.35" width="1.98" height="1.3" fill="#a31515"/><rect x="51.86" y="115.35" width="1.98" height="1.3" fill="#a31515"/><rect x="54.83" y="115.35" width="7.92" height="1.3" fill="#a31515"/><rect x="62.75" y="115.35" width="0.99" height="1.3" fill="#000000"/><rect x="8.30" y="121.32" width="0.99" height="1.3" fill="#008000"/><rect x="10.28" y="121.32" width="1.98" height="1.3" fill="#008000"/><rect x="13.25" y="121.32" width="5.94" height="1.3" fill="#008000"/><rect x="20.18" y="121.32" width="6.93" height="1.3" fill="#008000"/><rect x="8.30" y="123.31" width="4.95" height="1.3" fill="#0000ff"/><rect x="14.24" y="123.31" width="9.90" height="1.3" fill="#267f99"/><rect x="24.14" y="123.31" width="0.99" height="1.3" fill="#000000"/><rect x="12.26" y="125.30" width="1.98" height="1.3" fill="#a31515"/><rect x="14.24" y="125.30" width="0.99" height="1.3" fill="#a31515"/><rect x="12.26" y="127.29" width="4.95" height="1.3" fill="#267f99"/><rect x="18.20" y="127.29" width="1.98" height="1.3" fill="#001080"/><rect x="21.17" y="127.29" width="8.91" height="1.3" fill="#001080"/><rect x="31.07" y="127.29" width="1.98" height="1.3" fill="#001080"/><rect x="34.04" y="127.29" width="9.90" height="1.3" fill="#001080"/><rect x="44.93" y="127.29" width="3.96" height="1.3" fill="#001080"/><rect x="48.89" y="127.29" width="0.99" height="1.3" fill="#000000"/><rect x="12.26" y="129.28" width="1.98" height="1.3" fill="#a31515"/><rect x="14.24" y="129.28" width="0.99" height="1.3" fill="#a31515"/><rect x="12.26" y="133.26" width="2.97" height="1.3" fill="#0000ff"/><rect x="16.22" y="133.26" width="7.92" height="1.3" fill="#795e26"/><rect x="24.14" y="133.26" width="0.99" height="1.3" fill="#000000"/><rect x="25.13" y="133.26" width="3.96" height="1.3" fill="#0000ff"/><rect x="29.09" y="133.26" width="0.99" height="1.3" fill="#000000"/><rect x="30.08" y="133.26" width="0.99" height="1.3" fill="#000000"/><rect x="16.22" y="135.25" width="3.96" height="1.3" fill="#0000ff"/><rect x="20.18" y="135.25" width="0.99" height="1.3" fill="#000000"/><rect x="21.17" y="135.25" width="4.95" height="1.3" fill="#001080"/><rect x="27.11" y="135.25" width="0.99" height="1.3" fill="#000000"/><rect x="29.09" y="135.25" width="3.96" height="1.3" fill="#0000ff"/><rect x="12.26" y="139.23" width="2.97" height="1.3" fill="#0000ff"/><rect x="16.22" y="139.23" width="6.93" height="1.3" fill="#795e26"/><rect x="23.15" y="139.23" width="0.99" height="1.3" fill="#000000"/><rect x="24.14" y="139.23" width="3.96" height="1.3" fill="#0000ff"/><rect x="28.10" y="139.23" width="0.99" height="1.3" fill="#000000"/><rect x="29.09" y="139.23" width="0.99" height="1.3" fill="#000000"/><rect x="16.22" y="141.22" width="5.94" height="1.3" fill="#af00db"/><rect x="23.15" y="141.22" width="2.97" height="1.3" fill="#a31515"/><rect x="27.11" y="141.22" width="10.89" height="1.3" fill="#a31515"/><rect x="12.26" y="145.20" width="2.97" height="1.3" fill="#0000ff"/><rect x="16.22" y="145.20" width="7.92" height="1.3" fill="#795e26"/><rect x="24.14" y="145.20" width="0.99" height="1.3" fill="#000000"/><rect x="25.13" y="145.20" width="3.96" height="1.3" fill="#0000ff"/><rect x="29.09" y="145.20" width="0.99" height="1.3" fill="#000000"/><rect x="30.08" y="145.20" width="0.99" height="1.3" fill="#000000"/><rect x="16.22" y="147.19" width="5.94" height="1.3" fill="#af00db"/><rect x="23.15" y="147.19" width="2.97" height="1.3" fill="#a31515"/><rect x="27.11" y="147.19" width="10.89" height="1.3" fill="#a31515"/><rect x="8.30" y="153.16" width="4.95" height="1.3" fill="#0000ff"/><rect x="14.24" y="153.16" width="12.87" height="1.3" fill="#267f99"/><rect x="27.11" y="153.16" width="0.99" height="1.3" fill="#000000"/><rect x="28.10" y="153.16" width="9.90" height="1.3" fill="#267f99"/><rect x="38.00" y="153.16" width="0.99" height="1.3" fill="#000000"/><rect x="38.99" y="153.16" width="0.99" height="1.3" fill="#000000"/><rect x="12.26" y="155.15" width="1.98" height="1.3" fill="#a31515"/><rect x="14.24" y="155.15" width="1.98" height="1.3" fill="#a31515"/><rect x="16.22" y="155.15" width="1.98" height="1.3" fill="#a31515"/><rect x="12.26" y="159.13" width="2.97" height="1.3" fill="#0000ff"/><rect x="16.22" y="159.13" width="7.92" height="1.3" fill="#795e26"/><rect x="24.14" y="159.13" width="0.99" height="1.3" fill="#000000"/><rect x="25.13" y="159.13" width="3.96" height="1.3" fill="#0000ff"/><rect x="29.09" y="159.13" width="0.99" height="1.3" fill="#000000"/><rect x="31.07" y="159.13" width="3.96" height="1.3" fill="#001080"/><rect x="35.03" y="159.13" width="0.99" height="1.3" fill="#000000"/><rect x="37.01" y="159.13" width="1.98" height="1.3" fill="#001080"/><rect x="38.99" y="159.13" width="0.99" height="1.3" fill="#000000"/><rect x="39.98" y="159.13" width="0.99" height="1.3" fill="#000000"/><rect x="16.22" y="161.12" width="3.96" height="1.3" fill="#0000ff"/><rect x="20.18" y="161.12" width="0.99" height="1.3" fill="#000000"/><rect x="21.17" y="161.12" width="3.96" height="1.3" fill="#001080"/><rect x="26.12" y="161.12" width="0.99" height="1.3" fill="#000000"/><rect x="28.10" y="161.12" width="3.96" height="1.3" fill="#001080"/><rect x="16.22" y="163.11" width="3.96" height="1.3" fill="#0000ff"/><rect x="20.18" y="163.11" width="0.99" height="1.3" fill="#000000"/><rect x="21.17" y="163.11" width="1.98" height="1.3" fill="#001080"/><rect x="24.14" y="163.11" width="0.99" height="1.3" fill="#000000"/><rect x="26.12" y="163.11" width="1.98" height="1.3" fill="#001080"/><rect x="16.22" y="165.10" width="3.96" height="1.3" fill="#0000ff"/><rect x="20.18" y="165.10" width="0.99" height="1.3" fill="#000000"/><rect x="21.17" y="165.10" width="8.91" height="1.3" fill="#001080"/><rect x="31.07" y="165.10" width="0.99" height="1.3" fill="#000000"/><rect x="33.05" y="165.10" width="3.96" height="1.3" fill="#0000ff"/><rect x="16.22" y="167.09" width="3.96" height="1.3" fill="#0000ff"/><rect x="20.18" y="167.09" width="0.99" height="1.3" fill="#000000"/><rect x="21.17" y="167.09" width="15.84" height="1.3" fill="#001080"/><rect x="38.00" y="167.09" width="0.99" height="1.3" fill="#000000"/><rect x="39.98" y="167.09" width="0.99" height="1.3" fill="#000000"/><rect x="40.97" y="167.09" width="0.99" height="1.3" fill="#000000"/><rect x="16.22" y="169.08" width="3.96" height="1.3" fill="#0000ff"/><rect x="20.18" y="169.08" width="0.99" height="1.3" fill="#000000"/><rect x="21.17" y="169.08" width="9.90" height="1.3" fill="#001080"/><rect x="32.06" y="169.08" width="0.99" height="1.3" fill="#000000"/><rect x="34.04" y="169.08" width="3.96" height="1.3" fill="#0000ff"/><rect x="16.22" y="171.07" width="3.96" height="1.3" fill="#0000ff"/><rect x="20.18" y="171.07" width="0.99" height="1.3" fill="#000000"/><rect x="21.17" y="171.07" width="4.95" height="1.3" fill="#001080"/><rect x="27.11" y="171.07" width="0.99" height="1.3" fill="#000000"/><rect x="29.09" y="171.07" width="3.96" height="1.3" fill="#0000ff"/><rect x="12.26" y="175.05" width="2.97" height="1.3" fill="#0000ff"/><rect x="16.22" y="175.05" width="12.87" height="1.3" fill="#795e26"/><rect x="29.09" y="175.05" width="0.99" height="1.3" fill="#000000"/><rect x="30.08" y="175.05" width="3.96" height="1.3" fill="#0000ff"/><rect x="34.04" y="175.05" width="0.99" height="1.3" fill="#000000"/><rect x="36.02" y="175.05" width="3.96" height="1.3" fill="#001080"/><rect x="39.98" y="175.05" width="0.99" height="1.3" fill="#000000"/><rect x="40.97" y="175.05" width="0.99" height="1.3" fill="#000000"/><rect x="16.22" y="177.04" width="1.98" height="1.3" fill="#a31515"/><rect x="18.20" y="177.04" width="1.98" height="1.3" fill="#a31515"/><rect x="20.18" y="177.04" width="1.98" height="1.3" fill="#a31515"/><rect x="16.22" y="179.03" width="23.76" height="1.3" fill="#795e26"/><rect x="39.98" y="179.03" width="0.99" height="1.3" fill="#000000"/><rect x="40.97" y="179.03" width="3.96" height="1.3" fill="#001080"/><rect x="44.93" y="179.03" width="0.99" height="1.3" fill="#000000"/><rect x="16.22" y="181.02" width="2.97" height="1.3" fill="#af00db"/><rect x="19.19" y="181.02" width="0.99" height="1.3" fill="#000000"/><rect x="20.18" y="183.01" width="3.96" height="1.3" fill="#0000ff"/><rect x="24.14" y="183.01" width="0.99" height="1.3" fill="#000000"/><rect x="25.13" y="183.01" width="8.91" height="1.3" fill="#001080"/><rect x="35.03" y="183.01" width="0.99" height="1.3" fill="#000000"/><rect x="37.01" y="183.01" width="3.96" height="1.3" fill="#001080"/><rect x="16.22" y="185.00" width="5.94" height="1.3" fill="#af00db"/><rect x="23.15" y="185.00" width="9.90" height="1.3" fill="#267f99"/><rect x="33.05" y="185.00" width="0.99" height="1.3" fill="#000000"/><rect x="20.18" y="186.99" width="4.95" height="1.3" fill="#795e26"/><rect x="25.13" y="186.99" width="0.99" height="1.3" fill="#000000"/><rect x="26.12" y="186.99" width="6.93" height="1.3" fill="#a31515"/><rect x="34.04" y="186.99" width="6.93" height="1.3" fill="#a31515"/><rect x="41.96" y="186.99" width="3.96" height="1.3" fill="#a31515"/><rect x="46.91" y="186.99" width="4.95" height="1.3" fill="#a31515"/><rect x="52.85" y="186.99" width="4.95" height="1.3" fill="#a31515"/><rect x="58.79" y="186.99" width="2.97" height="1.3" fill="#a31515"/><rect x="62.75" y="186.99" width="6.93" height="1.3" fill="#a31515"/><rect x="70.67" y="186.99" width="10.89" height="1.3" fill="#a31515"/><rect x="82.55" y="186.99" width="1.98" height="1.3" fill="#a31515"/><rect x="85.52" y="186.99" width="2.97" height="1.3" fill="#a31515"/><rect x="89.48" y="186.99" width="0.99" height="1.3" fill="#a31515"/><rect x="91.46" y="186.99" width="7.92" height="1.3" fill="#a31515"/><rect x="99.38" y="186.99" width="0.99" height="1.3" fill="#000000"/><rect x="16.22" y="188.98" width="6.93" height="1.3" fill="#af00db"/><rect x="23.15" y="188.98" width="0.99" height="1.3" fill="#000000"/><rect x="20.18" y="190.97" width="2.97" height="1.3" fill="#001080"/><rect x="23.15" y="190.97" width="0.99" height="1.3" fill="#000000"/><rect x="24.14" y="190.97" width="3.96" height="1.3" fill="#795e26"/><rect x="28.10" y="190.97" width="0.99" height="1.3" fill="#000000"/><rect x="29.09" y="190.97" width="0.99" height="1.3" fill="#000000"/><rect x="32.06" y="190.97" width="0.99" height="1.3" fill="#008000"/><rect x="34.04" y="190.97" width="3.96" height="1.3" fill="#008000"/><rect x="38.99" y="190.97" width="2.97" height="1.3" fill="#008000"/><rect x="42.95" y="190.97" width="6.93" height="1.3" fill="#008000"/><rect x="16.22" y="192.96" width="5.94" height="1.3" fill="#af00db"/><rect x="23.15" y="192.96" width="17.82" height="1.3" fill="#267f99"/><rect x="40.97" y="192.96" width="0.99" height="1.3" fill="#000000"/><rect x="20.18" y="194.95" width="4.95" height="1.3" fill="#795e26"/><rect x="25.13" y="194.95" width="0.99" height="1.3" fill="#000000"/><rect x="26.12" y="194.95" width="3.96" height="1.3" fill="#0000ff"/><rect x="30.08" y="194.95" width="0.99" height="1.3" fill="#000000"/><rect x="31.07" y="194.95" width="1.98" height="1.3" fill="#001080"/><rect x="33.05" y="194.95" width="0.99" height="1.3" fill="#000000"/><rect x="20.18" y="196.94" width="3.96" height="1.3" fill="#0000ff"/><rect x="24.14" y="196.94" width="0.99" height="1.3" fill="#000000"/><rect x="25.13" y="196.94" width="12.87" height="1.3" fill="#001080"/><rect x="38.99" y="196.94" width="0.99" height="1.3" fill="#000000"/><rect x="40.97" y="196.94" width="4.95" height="1.3" fill="#0000ff"/><rect x="47.90" y="196.94" width="0.99" height="1.3" fill="#008000"/><rect x="49.88" y="196.94" width="2.97" height="1.3" fill="#008000"/><rect x="53.84" y="196.94" width="1.98" height="1.3" fill="#008000"/><rect x="56.81" y="196.94" width="2.97" height="1.3" fill="#008000"/><rect x="60.77" y="196.94" width="4.95" height="1.3" fill="#008000"/><rect x="66.71" y="196.94" width="3.96" height="1.3" fill="#008000"/><rect x="71.66" y="196.94" width="2.97" height="1.3" fill="#008000"/><rect x="75.62" y="196.94" width="3.96" height="1.3" fill="#008000"/><rect x="16.22" y="198.93" width="5.94" height="1.3" fill="#af00db"/><rect x="23.15" y="198.93" width="9.90" height="1.3" fill="#267f99"/><rect x="33.05" y="198.93" width="0.99" height="1.3" fill="#000000"/><rect x="20.18" y="200.92" width="1.98" height="1.3" fill="#af00db"/><rect x="23.15" y="200.92" width="3.96" height="1.3" fill="#001080"/><rect x="28.10" y="200.92" width="0.99" height="1.3" fill="#000000"/><rect x="30.08" y="200.92" width="12.87" height="1.3" fill="#0070c1"/><rect x="42.95" y="200.92" width="0.99" height="1.3" fill="#000000"/><rect x="24.14" y="202.91" width="3.96" height="1.3" fill="#001080"/><rect x="29.09" y="202.91" width="0.99" height="1.3" fill="#000000"/><rect x="31.07" y="202.91" width="12.87" height="1.3" fill="#0070c1"/><rect x="20.18" y="204.90" width="3.96" height="1.3" fill="#af00db"/><rect x="24.14" y="204.90" width="0.99" height="1.3" fill="#000000"/><rect x="24.14" y="206.89" width="3.96" height="1.3" fill="#001080"/><rect x="29.09" y="206.89" width="0.99" height="1.3" fill="#000000"/><rect x="31.07" y="206.89" width="12.87" height="1.3" fill="#0070c1"/><rect x="20.18" y="208.88" width="3.96" height="1.3" fill="#0000ff"/><rect x="24.14" y="208.88" width="0.99" height="1.3" fill="#000000"/><rect x="25.13" y="208.88" width="9.90" height="1.3" fill="#001080"/><rect x="36.02" y="208.88" width="0.99" height="1.3" fill="#000000"/><rect x="38.00" y="208.88" width="3.96" height="1.3" fill="#001080"/><rect x="43.94" y="208.88" width="0.99" height="1.3" fill="#008000"/><rect x="45.92" y="208.88" width="2.97" height="1.3" fill="#008000"/><rect x="49.88" y="208.88" width="1.98" height="1.3" fill="#008000"/><rect x="52.85" y="208.88" width="2.97" height="1.3" fill="#008000"/><rect x="56.81" y="208.88" width="4.95" height="1.3" fill="#008000"/><rect x="62.75" y="208.88" width="3.96" height="1.3" fill="#008000"/><rect x="67.70" y="208.88" width="2.97" height="1.3" fill="#008000"/><rect x="71.66" y="208.88" width="3.96" height="1.3" fill="#008000"/><rect x="16.22" y="210.87" width="3.96" height="1.3" fill="#af00db"/><rect x="20.18" y="210.87" width="0.99" height="1.3" fill="#000000"/><rect x="20.18" y="212.86" width="3.96" height="1.3" fill="#0000ff"/><rect x="24.14" y="212.86" width="0.99" height="1.3" fill="#000000"/><rect x="25.13" y="212.86" width="8.91" height="1.3" fill="#001080"/><rect x="35.03" y="212.86" width="0.99" height="1.3" fill="#000000"/><rect x="37.01" y="212.86" width="3.96" height="1.3" fill="#001080"/><rect x="20.18" y="214.85" width="3.96" height="1.3" fill="#0000ff"/><rect x="24.14" y="214.85" width="0.99" height="1.3" fill="#000000"/><rect x="25.13" y="214.85" width="9.90" height="1.3" fill="#001080"/><rect x="36.02" y="214.85" width="0.99" height="1.3" fill="#000000"/><rect x="38.00" y="214.85" width="3.96" height="1.3" fill="#0000ff"/><rect x="12.26" y="218.83" width="2.97" height="1.3" fill="#0000ff"/><rect x="16.22" y="218.83" width="18.81" height="1.3" fill="#795e26"/><rect x="35.03" y="218.83" width="0.99" height="1.3" fill="#000000"/><rect x="36.02" y="218.83" width="3.96" height="1.3" fill="#0000ff"/><rect x="39.98" y="218.83" width="0.99" height="1.3" fill="#000000"/><rect x="41.96" y="218.83" width="16.83" height="1.3" fill="#001080"/><rect x="58.79" y="218.83" width="0.99" height="1.3" fill="#000000"/><rect x="60.77" y="218.83" width="3.96" height="1.3" fill="#001080"/><rect x="64.73" y="218.83" width="0.99" height="1.3" fill="#000000"/><rect x="65.72" y="218.83" width="0.99" height="1.3" fill="#000000"/><rect x="16.22" y="220.82" width="1.98" height="1.3" fill="#a31515"/><rect x="18.20" y="220.82" width="1.98" height="1.3" fill="#a31515"/><rect x="20.18" y="220.82" width="1.98" height="1.3" fill="#a31515"/><rect x="16.22" y="222.81" width="29.70" height="1.3" fill="#795e26"/><rect x="45.92" y="222.81" width="0.99" height="1.3" fill="#000000"/><rect x="46.91" y="222.81" width="3.96" height="1.3" fill="#001080"/><rect x="50.87" y="222.81" width="0.99" height="1.3" fill="#000000"/><rect x="16.22" y="224.80" width="2.97" height="1.3" fill="#af00db"/><rect x="19.19" y="224.80" width="0.99" height="1.3" fill="#000000"/><rect x="20.18" y="226.79" width="3.96" height="1.3" fill="#0000ff"/><rect x="24.14" y="226.79" width="0.99" height="1.3" fill="#000000"/><rect x="25.13" y="226.79" width="15.84" height="1.3" fill="#001080"/><rect x="40.97" y="226.79" width="0.99" height="1.3" fill="#000000"/><rect x="41.96" y="226.79" width="16.83" height="1.3" fill="#001080"/><rect x="58.79" y="226.79" width="0.99" height="1.3" fill="#000000"/><rect x="60.77" y="226.79" width="0.99" height="1.3" fill="#000000"/><rect x="62.75" y="226.79" width="3.96" height="1.3" fill="#001080"/><rect x="16.22" y="228.78" width="5.94" height="1.3" fill="#af00db"/><rect x="23.15" y="228.78" width="9.90" height="1.3" fill="#267f99"/><rect x="33.05" y="228.78" width="0.99" height="1.3" fill="#000000"/><rect x="20.18" y="230.77" width="4.95" height="1.3" fill="#795e26"/><rect x="25.13" y="230.77" width="0.99" height="1.3" fill="#000000"/><rect x="26.12" y="230.77" width="6.93" height="1.3" fill="#a31515"/><rect x="34.04" y="230.77" width="6.93" height="1.3" fill="#a31515"/><rect x="41.96" y="230.77" width="3.96" height="1.3" fill="#a31515"/><rect x="46.91" y="230.77" width="4.95" height="1.3" fill="#a31515"/><rect x="52.85" y="230.77" width="4.95" height="1.3" fill="#a31515"/><rect x="58.79" y="230.77" width="2.97" height="1.3" fill="#a31515"/><rect x="62.75" y="230.77" width="6.93" height="1.3" fill="#a31515"/><rect x="70.67" y="230.77" width="10.89" height="1.3" fill="#a31515"/><rect x="82.55" y="230.77" width="1.98" height="1.3" fill="#a31515"/><rect x="85.52" y="230.77" width="2.97" height="1.3" fill="#a31515"/><rect x="89.48" y="230.77" width="0.99" height="1.3" fill="#a31515"/><rect x="91.46" y="230.77" width="7.92" height="1.3" fill="#a31515"/><rect x="99.38" y="230.77" width="0.99" height="1.3" fill="#000000"/><rect x="16.22" y="232.76" width="6.93" height="1.3" fill="#af00db"/><rect x="23.15" y="232.76" width="0.99" height="1.3" fill="#000000"/><rect x="20.18" y="234.75" width="2.97" height="1.3" fill="#001080"/><rect x="23.15" y="234.75" width="0.99" height="1.3" fill="#000000"/><rect x="24.14" y="234.75" width="3.96" height="1.3" fill="#795e26"/><rect x="28.10" y="234.75" width="0.99" height="1.3" fill="#000000"/><rect x="29.09" y="234.75" width="0.99" height="1.3" fill="#000000"/><rect x="32.06" y="234.75" width="0.99" height="1.3" fill="#008000"/><rect x="34.04" y="234.75" width="3.96" height="1.3" fill="#008000"/><rect x="38.99" y="234.75" width="2.97" height="1.3" fill="#008000"/><rect x="42.95" y="234.75" width="6.93" height="1.3" fill="#008000"/><rect x="16.22" y="236.74" width="5.94" height="1.3" fill="#af00db"/><rect x="23.15" y="236.74" width="23.76" height="1.3" fill="#267f99"/><rect x="46.91" y="236.74" width="0.99" height="1.3" fill="#000000"/><rect x="20.18" y="238.73" width="4.95" height="1.3" fill="#795e26"/><rect x="25.13" y="238.73" width="0.99" height="1.3" fill="#000000"/><rect x="26.12" y="238.73" width="3.96" height="1.3" fill="#0000ff"/><rect x="30.08" y="238.73" width="0.99" height="1.3" fill="#000000"/><rect x="31.07" y="238.73" width="1.98" height="1.3" fill="#001080"/><rect x="33.05" y="238.73" width="0.99" height="1.3" fill="#000000"/><rect x="20.18" y="240.72" width="4.95" height="1.3" fill="#001080"/><rect x="26.12" y="240.72" width="0.99" height="1.3" fill="#000000"/><rect x="28.10" y="240.72" width="3.96" height="1.3" fill="#0000ff"/><rect x="32.06" y="240.72" width="0.99" height="1.3" fill="#000000"/><rect x="33.05" y="240.72" width="15.84" height="1.3" fill="#001080"/><rect x="24.14" y="242.71" width="16.83" height="1.3" fill="#001080"/><rect x="40.97" y="242.71" width="0.99" height="1.3" fill="#000000"/><rect x="42.95" y="242.71" width="3.96" height="1.3" fill="#001080"/><rect x="20.18" y="244.70" width="0.99" height="1.3" fill="#000000"/><rect x="23.15" y="244.70" width="0.99" height="1.3" fill="#008000"/><rect x="25.13" y="244.70" width="2.97" height="1.3" fill="#008000"/><rect x="29.09" y="244.70" width="1.98" height="1.3" fill="#008000"/><rect x="32.06" y="244.70" width="2.97" height="1.3" fill="#008000"/><rect x="36.02" y="244.70" width="4.95" height="1.3" fill="#008000"/><rect x="41.96" y="244.70" width="3.96" height="1.3" fill="#008000"/><rect x="46.91" y="244.70" width="2.97" height="1.3" fill="#008000"/><rect x="50.87" y="244.70" width="3.96" height="1.3" fill="#008000"/><rect x="16.22" y="246.69" width="5.94" height="1.3" fill="#af00db"/><rect x="23.15" y="246.69" width="9.90" height="1.3" fill="#267f99"/><rect x="33.05" y="246.69" width="0.99" height="1.3" fill="#000000"/><rect x="20.18" y="248.68" width="1.98" height="1.3" fill="#af00db"/><rect x="23.15" y="248.68" width="3.96" height="1.3" fill="#001080"/><rect x="28.10" y="248.68" width="0.99" height="1.3" fill="#000000"/><rect x="30.08" y="248.68" width="18.81" height="1.3" fill="#0070c1"/><rect x="48.89" y="248.68" width="0.99" height="1.3" fill="#000000"/><rect x="24.14" y="250.67" width="3.96" height="1.3" fill="#001080"/><rect x="29.09" y="250.67" width="0.99" height="1.3" fill="#000000"/><rect x="31.07" y="250.67" width="18.81" height="1.3" fill="#0070c1"/><rect x="20.18" y="252.66" width="3.96" height="1.3" fill="#af00db"/><rect x="24.14" y="252.66" width="0.99" height="1.3" fill="#000000"/><rect x="24.14" y="254.65" width="3.96" height="1.3" fill="#001080"/><rect x="29.09" y="254.65" width="0.99" height="1.3" fill="#000000"/><rect x="31.07" y="254.65" width="18.81" height="1.3" fill="#0070c1"/><rect x="20.18" y="256.64" width="3.96" height="1.3" fill="#0000ff"/><rect x="24.14" y="256.64" width="0.99" height="1.3" fill="#000000"/><rect x="25.13" y="256.64" width="15.84" height="1.3" fill="#001080"/><rect x="24.14" y="258.63" width="16.83" height="1.3" fill="#001080"/><rect x="40.97" y="258.63" width="0.99" height="1.3" fill="#000000"/><rect x="42.95" y="258.63" width="3.96" height="1.3" fill="#001080"/><rect x="20.18" y="260.62" width="0.99" height="1.3" fill="#000000"/><rect x="23.15" y="260.62" width="0.99" height="1.3" fill="#008000"/><rect x="25.13" y="260.62" width="2.97" height="1.3" fill="#008000"/><rect x="29.09" y="260.62" width="1.98" height="1.3" fill="#008000"/><rect x="32.06" y="260.62" width="2.97" height="1.3" fill="#008000"/><rect x="36.02" y="260.62" width="4.95" height="1.3" fill="#008000"/><rect x="41.96" y="260.62" width="3.96" height="1.3" fill="#008000"/><rect x="46.91" y="260.62" width="2.97" height="1.3" fill="#008000"/><rect x="50.87" y="260.62" width="3.96" height="1.3" fill="#008000"/><rect x="16.22" y="262.61" width="3.96" height="1.3" fill="#af00db"/><rect x="20.18" y="262.61" width="0.99" height="1.3" fill="#000000"/><rect x="20.18" y="264.60" width="1.98" height="1.3" fill="#af00db"/><rect x="23.15" y="264.60" width="2.97" height="1.3" fill="#795e26"/><rect x="26.12" y="264.60" width="0.99" height="1.3" fill="#000000"/><rect x="27.11" y="264.60" width="3.96" height="1.3" fill="#0000ff"/><rect x="31.07" y="264.60" width="0.99" height="1.3" fill="#000000"/><rect x="32.06" y="264.60" width="15.84" height="1.3" fill="#001080"/><rect x="47.90" y="264.60" width="0.99" height="1.3" fill="#000000"/><rect x="49.88" y="264.60" width="0.99" height="1.3" fill="#000000"/><rect x="51.86" y="264.60" width="16.83" height="1.3" fill="#001080"/><rect x="68.69" y="264.60" width="0.99" height="1.3" fill="#000000"/><rect x="24.14" y="266.59" width="3.96" height="1.3" fill="#0000ff"/><rect x="28.10" y="266.59" width="0.99" height="1.3" fill="#000000"/><rect x="29.09" y="266.59" width="15.84" height="1.3" fill="#001080"/><rect x="44.93" y="266.59" width="0.99" height="1.3" fill="#000000"/><rect x="45.92" y="266.59" width="5.94" height="1.3" fill="#795e26"/><rect x="51.86" y="266.59" width="0.99" height="1.3" fill="#000000"/><rect x="52.85" y="266.59" width="3.96" height="1.3" fill="#001080"/><rect x="56.81" y="266.59" width="0.99" height="1.3" fill="#000000"/><rect x="20.18" y="268.58" width="0.99" height="1.3" fill="#008000"/><rect x="22.16" y="268.58" width="5.94" height="1.3" fill="#008000"/><rect x="29.09" y="268.58" width="2.97" height="1.3" fill="#008000"/><rect x="33.05" y="268.58" width="4.95" height="1.3" fill="#008000"/><rect x="38.99" y="268.58" width="3.96" height="1.3" fill="#008000"/><rect x="43.94" y="268.58" width="1.98" height="1.3" fill="#008000"/><rect x="46.91" y="268.58" width="11.88" height="1.3" fill="#008000"/><rect x="20.18" y="270.57" width="3.96" height="1.3" fill="#0000ff"/><rect x="24.14" y="270.57" width="0.99" height="1.3" fill="#000000"/><rect x="25.13" y="270.57" width="15.84" height="1.3" fill="#001080"/><rect x="40.97" y="270.57" width="0.99" height="1.3" fill="#000000"/><rect x="41.96" y="270.57" width="0.99" height="1.3" fill="#000000"/><rect x="42.95" y="270.57" width="0.99" height="1.3" fill="#098658"/><rect x="43.94" y="270.57" width="0.99" height="1.3" fill="#000000"/><rect x="45.92" y="270.57" width="0.99" height="1.3" fill="#000000"/><rect x="47.90" y="270.57" width="3.96" height="1.3" fill="#001080"/><rect x="20.18" y="272.56" width="3.96" height="1.3" fill="#0000ff"/><rect x="24.14" y="272.56" width="0.99" height="1.3" fill="#000000"/><rect x="25.13" y="272.56" width="9.90" height="1.3" fill="#001080"/><rect x="36.02" y="272.56" width="0.99" height="1.3" fill="#000000"/><rect x="38.00" y="272.56" width="3.96" height="1.3" fill="#0000ff"/><rect x="12.26" y="276.54" width="2.97" height="1.3" fill="#0000ff"/><rect x="16.22" y="276.54" width="19.80" height="1.3" fill="#795e26"/><rect x="36.02" y="276.54" width="0.99" height="1.3" fill="#000000"/><rect x="37.01" y="276.54" width="3.96" height="1.3" fill="#0000ff"/><rect x="40.97" y="276.54" width="0.99" height="1.3" fill="#000000"/><rect x="41.96" y="276.54" width="0.99" height="1.3" fill="#000000"/><rect x="16.22" y="278.53" width="10.89" height="1.3" fill="#001080"/><rect x="28.10" y="278.53" width="0.99" height="1.3" fill="#000000"/><rect x="30.08" y="278.53" width="2.97" height="1.3" fill="#098658"/><rect x="16.22" y="280.52" width="12.87" height="1.3" fill="#001080"/><rect x="30.08" y="280.52" width="0.99" height="1.3" fill="#000000"/><rect x="32.06" y="280.52" width="2.97" height="1.3" fill="#098658"/><rect x="16.22" y="284.50" width="0.99" height="1.3" fill="#008000"/><rect x="18.20" y="284.50" width="2.97" height="1.3" fill="#008000"/><rect x="22.16" y="284.50" width="3.96" height="1.3" fill="#008000"/><rect x="27.11" y="284.50" width="1.98" height="1.3" fill="#008000"/><rect x="30.08" y="284.50" width="2.97" height="1.3" fill="#008000"/><rect x="34.04" y="284.50" width="3.96" height="1.3" fill="#008000"/><rect x="38.99" y="284.50" width="1.98" height="1.3" fill="#008000"/><rect x="41.96" y="284.50" width="0.99" height="1.3" fill="#008000"/><rect x="43.94" y="284.50" width="9.90" height="1.3" fill="#008000"/><rect x="16.22" y="286.49" width="13.86" height="1.3" fill="#001080"/><rect x="31.07" y="286.49" width="0.99" height="1.3" fill="#000000"/><rect x="33.05" y="286.49" width="3.96" height="1.3" fill="#0000ff"/><rect x="37.01" y="286.49" width="0.99" height="1.3" fill="#000000"/><rect x="38.00" y="286.49" width="8.91" height="1.3" fill="#001080"/><rect x="16.22" y="288.48" width="1.98" height="1.3" fill="#af00db"/><rect x="19.19" y="288.48" width="9.90" height="1.3" fill="#795e26"/><rect x="29.09" y="288.48" width="0.99" height="1.3" fill="#000000"/><rect x="30.08" y="288.48" width="13.86" height="1.3" fill="#001080"/><rect x="43.94" y="288.48" width="0.99" height="1.3" fill="#000000"/><rect x="45.92" y="288.48" width="9.90" height="1.3" fill="#267f99"/><rect x="55.82" y="288.48" width="0.99" height="1.3" fill="#000000"/><rect x="56.81" y="288.48" width="0.99" height="1.3" fill="#000000"/><rect x="20.18" y="290.47" width="13.86" height="1.3" fill="#001080"/><rect x="35.03" y="290.47" width="0.99" height="1.3" fill="#000000"/><rect x="37.01" y="290.47" width="0.99" height="1.3" fill="#098658"/><rect x="16.22" y="294.45" width="0.99" height="1.3" fill="#008000"/><rect x="18.20" y="294.45" width="2.97" height="1.3" fill="#008000"/><rect x="22.16" y="294.45" width="9.90" height="1.3" fill="#008000"/><rect x="33.05" y="294.45" width="1.98" height="1.3" fill="#008000"/><rect x="36.02" y="294.45" width="3.96" height="1.3" fill="#008000"/><rect x="40.97" y="294.45" width="1.98" height="1.3" fill="#008000"/><rect x="43.94" y="294.45" width="0.99" height="1.3" fill="#008000"/><rect x="45.92" y="294.45" width="4.95" height="1.3" fill="#008000"/><rect x="51.86" y="294.45" width="3.96" height="1.3" fill="#008000"/><rect x="56.81" y="294.45" width="1.98" height="1.3" fill="#008000"/><rect x="59.78" y="294.45" width="10.89" height="1.3" fill="#008000"/><rect x="71.66" y="294.45" width="2.97" height="1.3" fill="#008000"/><rect x="75.62" y="294.45" width="2.97" height="1.3" fill="#008000"/><rect x="16.22" y="296.44" width="1.98" height="1.3" fill="#af00db"/><rect x="19.19" y="296.44" width="3.96" height="1.3" fill="#0000ff"/><rect x="23.15" y="296.44" width="0.99" height="1.3" fill="#000000"/><rect x="24.14" y="296.44" width="15.84" height="1.3" fill="#001080"/><rect x="39.98" y="296.44" width="0.99" height="1.3" fill="#000000"/><rect x="20.18" y="298.43" width="19.80" height="1.3" fill="#001080"/><rect x="40.97" y="298.43" width="0.99" height="1.3" fill="#000000"/><rect x="42.95" y="298.43" width="3.96" height="1.3" fill="#0000ff"/><rect x="46.91" y="298.43" width="0.99" height="1.3" fill="#000000"/><rect x="47.90" y="298.43" width="15.84" height="1.3" fill="#001080"/><rect x="20.18" y="300.42" width="1.98" height="1.3" fill="#af00db"/><rect x="23.15" y="300.42" width="9.90" height="1.3" fill="#795e26"/><rect x="33.05" y="300.42" width="0.99" height="1.3" fill="#000000"/><rect x="34.04" y="300.42" width="19.80" height="1.3" fill="#001080"/><rect x="53.84" y="300.42" width="0.99" height="1.3" fill="#000000"/><rect x="55.82" y="300.42" width="9.90" height="1.3" fill="#267f99"/><rect x="65.72" y="300.42" width="0.99" height="1.3" fill="#000000"/><rect x="66.71" y="300.42" width="0.99" height="1.3" fill="#000000"/><rect x="24.14" y="302.41" width="19.80" height="1.3" fill="#001080"/><rect x="44.93" y="302.41" width="0.99" height="1.3" fill="#000000"/><rect x="46.91" y="302.41" width="0.99" height="1.3" fill="#098658"/><rect x="20.18" y="304.40" width="3.96" height="1.3" fill="#af00db"/><rect x="24.14" y="304.40" width="0.99" height="1.3" fill="#000000"/><rect x="24.14" y="306.39" width="19.80" height="1.3" fill="#001080"/><rect x="44.93" y="306.39" width="0.99" height="1.3" fill="#000000"/><rect x="46.91" y="306.39" width="1.98" height="1.3" fill="#098658"/><rect x="49.88" y="306.39" width="0.99" height="1.3" fill="#000000"/><rect x="51.86" y="306.39" width="19.80" height="1.3" fill="#001080"/><rect x="16.22" y="310.37" width="0.99" height="1.3" fill="#008000"/><rect x="18.20" y="310.37" width="8.91" height="1.3" fill="#008000"/><rect x="28.10" y="310.37" width="4.95" height="1.3" fill="#008000"/><rect x="34.04" y="310.37" width="3.96" height="1.3" fill="#008000"/><rect x="16.22" y="312.36" width="3.96" height="1.3" fill="#0000ff"/><rect x="20.18" y="312.36" width="0.99" height="1.3" fill="#000000"/><rect x="21.17" y="312.36" width="9.90" height="1.3" fill="#001080"/><rect x="32.06" y="312.36" width="0.99" height="1.3" fill="#000000"/><rect x="34.04" y="312.36" width="0.99" height="1.3" fill="#000000"/><rect x="20.18" y="314.35" width="10.89" height="1.3" fill="#001080"/><rect x="32.06" y="314.35" width="0.99" height="1.3" fill="#000000"/><rect x="34.04" y="314.35" width="13.86" height="1.3" fill="#001080"/><rect x="48.89" y="314.35" width="0.99" height="1.3" fill="#000000"/><rect x="50.87" y="314.35" width="12.87" height="1.3" fill="#001080"/><rect x="64.73" y="314.35" width="0.99" height="1.3" fill="#000000"/><rect x="66.71" y="314.35" width="19.80" height="1.3" fill="#001080"/><rect x="16.22" y="316.34" width="0.99" height="1.3" fill="#000000"/><rect x="16.22" y="320.32" width="5.94" height="1.3" fill="#af00db"/><rect x="23.15" y="320.32" width="3.96" height="1.3" fill="#0000ff"/><rect x="27.11" y="320.32" width="0.99" height="1.3" fill="#000000"/><rect x="28.10" y="320.32" width="9.90" height="1.3" fill="#001080"/></g><rect x="8" y="9.58" width="94" height="2.2" fill="#e8c77e" opacity="0.9"/><rect x="8" y="184.70" width="94" height="2.2" fill="#e8c77e" opacity="0.9"/><rect x="8" y="226.49" width="94" height="2.2" fill="#e8c77e" opacity="0.9"/><rect x="8" y="152.66" width="94" height="2.6" fill="#5a9de0" opacity="0.85"/><rect x="8" y="156.64" width="94" height="2.6" fill="#5a9de0" opacity="0.85"/></svg><div class="r" style="left:1763.3px;top:146.3px;width:17.7px;height:2.4px;background:#3b3b3b;"></div><div class="r" style="left:1777px;top:141px;width:4px;height:5.3px;background:#d7a000;"></div><div class="r" style="left:1776.8px;top:430.4px;width:4.2px;height:16.6px;background:#1a73d0;"></div><div class="r" style="left:1776.6px;top:493.4px;width:5px;height:7.6px;background:#d7a000;"></div><div class="r" style="left:1776.6px;top:573.8px;width:5px;height:8.8px;background:#d7a000;"></div><div class="r" style="left:1779.5px;top:277px;width:2px;height:6px;background:#c03bd0;"></div><div class="r" style="left:1779.5px;top:735px;width:2px;height:7px;background:#c03bd0;"></div><div class="r" style="left:0px;top:1124px;width:1782px;height:4px;background:#000000;"></div><div class="r" style="left:0;top:0;width:1782px;height:1124.5px;border:1px solid #acacac;border-radius:9px;box-sizing:border-box"></div><svg class="r" style="left:0px;top:0px;" width="9" height="9" viewBox="0 0 9 9"><path d="M0 0 H9 A9 9 0 0 0 0 9 Z" fill="#e6e6e6"/></svg><svg class="r" style="left:1773px;top:0px;" width="9" height="9" viewBox="0 0 9 9"><path d="M0 0 H9 V9 A9 9 0 0 0 0 0 Z" fill="#e6e6e6"/></svg><svg class="r" style="left:0px;top:1115.5px;" width="9" height="9" viewBox="0 0 9 9"><path d="M0 0 A9 9 0 0 0 9 9 H0 Z" fill="#e6e6e6"/></svg><svg class="r" style="left:1773px;top:1115.5px;" width="9" height="9" viewBox="0 0 9 9"><path d="M9 0 V9 H0 A9 9 0 0 0 9 0 Z" fill="#e6e6e6"/></svg><svg class="r" style="left:13px;top:13px;" width="26" height="26" viewBox="0 0 26 26"><path d="M18.5 1.2 L24.2 4 Q25 4.4 25 5.3 V20.7 Q25 21.6 24.2 22 L18.5 24.8 Q17.7 25.2 17 24.6 L6.6 15.2 L2.2 18.6 Q1.6 19 1.1 18.6 L0.4 17.9 Q0 17.4 0.4 16.9 L4.2 13 L0.4 9.1 Q0 8.6 0.4 8.1 L1.1 7.4 Q1.6 7 2.2 7.4 L6.6 10.8 L17 1.4 Q17.7 0.8 18.5 1.2 Z M18.5 7.2 L10.6 13 L18.5 18.8 Z" fill="#0078d4" fill-rule="evenodd"/><path d="M18.5 1.2 L24.2 4 Q25 4.4 25 5.3 V20.7 Q25 21.6 24.2 22 L18.5 24.8 Z" fill="#1e9cef"/></svg><svg class="r" style="left:390px;top:17px;" width="24" height="16" viewBox="0 0 24 16"><circle cx="5.30" cy="8.4" r="1.6" fill="#3b3b3b"/><circle cx="11.60" cy="8.4" r="1.6" fill="#3b3b3b"/><circle cx="17.90" cy="8.4" r="1.6" fill="#3b3b3b"/></svg><svg class="r" style="left:481px;top:17px;" width="22" height="18" viewBox="0 0 22 18"><path d="M2 9 H20 M2 9 L9 2 M2 9 L9 16" fill="none" stroke="#3b3b3b" stroke-width="1.7" stroke-linecap="round" stroke-linejoin="round" /></svg><svg class="r" style="left:519px;top:17px;" width="22" height="18" viewBox="0 0 22 18"><path d="M20 9 H2 M20 9 L13 2 M20 9 L13 16" fill="none" stroke="#b0b0b0" stroke-width="1.7" stroke-linecap="round" stroke-linejoin="round" /></svg><svg class="r" style="left:1258px;top:13px;" width="28" height="25" viewBox="0 0 28 25"><path d="M4 5 Q3 5 3 6.5 V17 Q3 18.5 4.5 18.5 H7 V22.5 L11.5 18.5 H19.5 Q21 18.5 21 17 V12" fill="none" stroke="#3b3b3b" stroke-width="2.0" stroke-linecap="round" stroke-linejoin="round" /><path d="M16 5 H4" fill="none" stroke="#3b3b3b" stroke-width="2.0" stroke-linecap="round" stroke-linejoin="round" /><path d="M20 1 L21.2 4.3 L24.5 5.5 L21.2 6.7 L20 10 L18.8 6.7 L15.5 5.5 L18.8 4.3 Z" fill="#1f1f1f"/><path d="M24 8.5 L24.8 10.4 L26.7 11.2 L24.8 12 L24 13.9 L23.2 12 L21.3 11.2 L23.2 10.4 Z" fill="#1f1f1f"/></svg><svg class="r" style="left:1288px;top:20px;" width="16" height="11" viewBox="0 0 16 11"><path d="M2 2.5 L8 8.5 L14 2.5" fill="none" stroke="#3b3b3b" stroke-width="1.6" stroke-linecap="round" stroke-linejoin="round" /></svg><svg class="r" style="left:1429px;top:14px;" width="24" height="23" viewBox="0 0 24 23"><rect x="2" y="2" width="7.5" height="19" rx="2" fill="none" stroke="#3b3b3b" stroke-width="2"/><rect x="13.5" y="2" width="8.5" height="8" rx="2" fill="none" stroke="#3b3b3b" stroke-width="2"/><rect x="13.5" y="13" width="8.5" height="8" rx="2" fill="none" stroke="#3b3b3b" stroke-width="2"/></svg><svg class="r" style="left:1468px;top:14px;" width="24" height="23" viewBox="0 0 24 23"><rect x="2" y="2" width="19.5" height="19" rx="3" fill="none" stroke="#1f1f1f" stroke-width="2"/><path d="M3 3 H10 V20 H3 Z" fill="#1f1f1f"/><path d="M10 2 V21" stroke="#1f1f1f" stroke-width="2"/></svg><svg class="r" style="left:1506px;top:14px;" width="24" height="23" viewBox="0 0 24 23"><rect x="2" y="2" width="19.5" height="19" rx="3" fill="none" stroke="#1f1f1f" stroke-width="2"/><path d="M3 14.5 H20.5 V20 H3 Z" fill="#1f1f1f"/><path d="M2 14.5 H21.5" stroke="#1f1f1f" stroke-width="2"/></svg><svg class="r" style="left:1545px;top:14px;" width="24" height="23" viewBox="0 0 24 23"><rect x="1.5" y="2" width="19.5" height="19" rx="3" fill="none" stroke="#3b3b3b" stroke-width="2"/><path d="M13 2 V21" stroke="#3b3b3b" stroke-width="2"/></svg><div class="r" style="left:1604px;top:25.5px;width:15.5px;height:1.6px;background:#1f1f1f;"></div><svg class="r" style="left:1670px;top:17px;" width="20" height="19" viewBox="0 0 20 19"><rect x="2" y="2" width="15.5" height="14.5" rx="2.5" fill="none" stroke="#1f1f1f" stroke-width="1.8"/></svg><svg class="r" style="left:1738px;top:17px;" width="20" height="19" viewBox="0 0 20 19"><path d="M2 2 L17.5 17 M17.5 2 L2 17" fill="none" stroke="#1f1f1f" stroke-width="1.7" stroke-linecap="round" stroke-linejoin="round" /></svg><div class="r" style="left:0px;top:52px;width:3px;height:71px;background:#005fb8;"></div><svg class="r" style="left:18px;top:68px;" width="34" height="40" viewBox="0 0 34 40"><path d="M8 3 H17.5 L27.5 13 V28.5 Q27.5 32 24 32 H10.5 Q7 32 7 28.5 V6.5 Q7 3 10.5 3 Z" fill="none" stroke="#1f1f1f" stroke-width="2.2" stroke-linecap="round" stroke-linejoin="round" /><path d="M18 3 V10.5 Q18 13 20.5 13 H27.5" fill="none" stroke="#1f1f1f" stroke-width="2.2" stroke-linecap="round" stroke-linejoin="round" /><path d="M3 10 V31 Q3 37 9 37 H24.5" fill="none" stroke="#1f1f1f" stroke-width="2.2" stroke-linecap="round" stroke-linejoin="round" /></svg><svg class="r" style="left:18px;top:140px;" width="36" height="38" viewBox="0 0 36 38"><circle cx="14.3" cy="15.2" r="10.6" fill="none" stroke="#616161" stroke-width="2.1"/><path d="M22 23.5 L32 33.5" fill="none" stroke="#616161" stroke-width="2.2" stroke-linecap="round" stroke-linejoin="round" /></svg><svg class="r" style="left:18px;top:208px;" width="34" height="42" viewBox="0 0 34 42"><circle cx="9.7" cy="9.7" r="4.6" fill="none" stroke="#616161" stroke-width="2"/><circle cx="25.3" cy="16.6" r="4.6" fill="none" stroke="#616161" stroke-width="2"/><circle cx="9.7" cy="34" r="4.6" fill="none" stroke="#616161" stroke-width="2"/><path d="M9.7 14.3 V29.4" fill="none" stroke="#616161" stroke-width="2" stroke-linecap="round" stroke-linejoin="round" /><path d="M9.7 25 Q10 24.5 15 24.5 H19 Q25 24.5 25.3 21.2" fill="none" stroke="#616161" stroke-width="2" stroke-linecap="round" stroke-linejoin="round" /></svg><div class="r" style="left:35.9px;top:230.5px;width:23.2px;height:23.2px;border-radius:50%;background:#005fb8"></div><div class="t" style="left:41.6px;top:233.5px;font-size:16px;line-height:16px;color:#fff;font-weight:700">5</div><svg class="r" style="left:16px;top:284px;" width="38" height="38" viewBox="0 0 38 38"><path d="M9 14 V5.5 Q9 3.5 11 4.5 L31 15 Q33 16 31 17.3 L21.5 23" fill="none" stroke="#616161" stroke-width="2.1" stroke-linecap="round" stroke-linejoin="round" /><ellipse cx="10.6" cy="27" rx="5.5" ry="7" fill="none" stroke="#616161" stroke-width="2"/><path d="M5.5 24.5 H15.7 M2 22 L5 24 M19 22 L16 24 M1.5 28 H5 M16 28 H19.5 M2.5 34 L5.5 31.5 M18.5 34 L15.5 31.5 M10.6 20 V17.5" fill="none" stroke="#616161" stroke-width="1.8" stroke-linecap="round" stroke-linejoin="round" /></svg><svg class="r" style="left:16px;top:354px;" width="40" height="40" viewBox="0 0 40 40"><path d="M25.5 24.5 H6 Q3 24.5 3 21.5 V6.5 Q3 3.5 6 3.5 H26.5 Q29.5 3.5 29.5 6.5 V14" fill="none" stroke="#616161" stroke-width="2.1" stroke-linecap="round" stroke-linejoin="round" /><path d="M6.8 30 H16.3 M12.5 25 V30" fill="none" stroke="#616161" stroke-width="2.1" stroke-linecap="round" stroke-linejoin="round" /><circle cx="27.5" cy="25.6" r="10.1" fill="#616161"/><path d="M21.8 25 L25.2 28.2 L21.8 31.4 M33.2 19.8 L29.8 23 L33.2 26.2" fill="none" stroke="#ffffff" stroke-width="1.9" stroke-linecap="round" stroke-linejoin="round" /></svg><svg class="r" style="left:18px;top:424px;" width="36" height="38" viewBox="0 0 36 38"><path d="M3.2 20.5 V9 Q3.2 6.2 6 6.2 H13.8 Q16.5 6.2 16.5 9 V34.3 M3.2 20.5 H27.5 Q29.8 20.5 29.8 23 V31.5 Q29.8 34.3 27 34.3 H6 Q3.2 34.3 3.2 31.5 V20.5" fill="none" stroke="#616161" stroke-width="2.1" stroke-linecap="round" stroke-linejoin="round" /><path d="M24.4 4.6 L31.4 11.6 L24.4 18.6 L17.4 11.6 Z" fill="none" stroke="#616161" stroke-width="2.1" stroke-linecap="round" stroke-linejoin="round" /></svg><svg class="r" style="left:18px;top:495px;" width="36" height="40" viewBox="0 0 36 40"><path d="M8 4.8 H27.1 M11.7 4.8 V17.5 L5 30 Q3.8 33.8 7.5 33.8 H28 Q31.5 33.8 30.5 30 L23.4 17.5 V4.8 M7.8 24.8 H27.5" fill="none" stroke="#616161" stroke-width="2.1" stroke-linecap="round" stroke-linejoin="round" /></svg><svg class="r" style="left:16px;top:566px;" width="40" height="40" viewBox="0 0 40 40"><circle cx="19.5" cy="19.7" r="15.9" fill="none" stroke="#616161" stroke-width="2.2"/><path d="M12.3 9.2 L15.2 12 Q19.5 10.8 23.8 12 L26.8 9.2 Q27.6 12 27.3 14.8 Q29 17.5 28 21 Q26.5 25.5 22.6 26.2 Q24 27.5 24 30 V35.2 Q19.5 36.3 15 35.2 V31 Q13 31.5 11.5 29.8 Q10.5 28 9 27.5 Q11 27.3 12.2 29 Q13.5 30 15.3 29.6 Q15.5 27.3 16.4 26.2 Q12.5 25.5 11 21 Q10 17.5 11.8 14.8 Q11.5 12 12.3 9.2 Z" fill="#616161"/></svg><svg class="r" style="left:17px;top:968px;" width="38" height="38" viewBox="0 0 38 38"><circle cx="18.5" cy="18.4" r="14.6" fill="none" stroke="#424242" stroke-width="2.3"/><circle cx="18.5" cy="12.5" r="4.3" fill="#616161"/><path d="M10 19 H27 Q27 27 18.5 27 Q10 27 10 19 Z" fill="#616161"/></svg><svg class="r" style="left:17.4px;top:1039.6px;" width="36" height="36" viewBox="0 0 36 36"><path d="M32.81 14.58 L32.81 21.42 L28.01 22.05 L27.94 22.22 L30.89 26.05 L26.05 30.89 L22.22 27.94 L22.05 28.01 L21.42 32.81 L14.58 32.81 L13.95 28.01 L13.78 27.94 L9.95 30.89 L5.11 26.05 L8.06 22.22 L7.99 22.05 L3.19 21.42 L3.19 14.58 L7.99 13.95 L8.06 13.78 L5.11 9.95 L9.95 5.11 L13.78 8.06 L13.95 7.99 L14.58 3.19 L21.42 3.19 L22.05 7.99 L22.22 8.06 L26.05 5.11 L30.89 9.95 L27.94 13.78 L28.01 13.95 Z" fill="none" stroke="#616161" stroke-width="2.1" stroke-linecap="round" stroke-linejoin="round" /><circle cx="18" cy="18" r="3.8" fill="none" stroke="#616161" stroke-width="2.1"/></svg><svg class="r" style="left:465px;top:70px;" width="30" height="16" viewBox="0 0 30 16"><circle cx="8.50" cy="8.4" r="1.6" fill="#424242"/><circle cx="14.80" cy="8.4" r="1.6" fill="#424242"/><circle cx="21.10" cy="8.4" r="1.6" fill="#424242"/></svg><svg class="r" style="left:76px;top:113.5px;" width="20" height="14" viewBox="0 0 20 14"><path d="M2.2 2.4 L9.4 10.6 L16.6 2.4" fill="none" stroke="#424242" stroke-width="1.6" stroke-linecap="round" stroke-linejoin="round" /></svg><svg class="r" style="left:364px;top:106px;" width="24" height="28" viewBox="0 0 24 28"><path d="M5 25 H4.5 Q3.5 25 3.5 24 V5.5 Q3.5 4.4 4.6 4.4 H11.5 L17.5 10.4 V13 M11.5 4.4 V9.2 Q11.5 10.4 12.7 10.4 H17.5" fill="none" stroke="#3b3b3b" stroke-width="1.8" stroke-linecap="round" stroke-linejoin="round" /><circle cx="16" cy="19.5" r="7" fill="#3b3b3b"/><path d="M16 15.8 V23.2 M12.3 19.5 H19.7" fill="none" stroke="#ffffff" stroke-width="1.8" stroke-linecap="round" stroke-linejoin="round" /></svg><svg class="r" style="left:397px;top:106px;" width="28" height="28" viewBox="0 0 28 28"><path d="M7 22.9 H5.5 Q3.5 22.9 3.5 21 V8.5 Q3.5 6.3 5.7 6.3 H10.8 L13.5 9 H21.5 Q23.6 9 23.6 11 V13" fill="none" stroke="#3b3b3b" stroke-width="1.8" stroke-linecap="round" stroke-linejoin="round" /><path d="M3.5 11.5 H11 L13.5 9" fill="none" stroke="#3b3b3b" stroke-width="1.8" stroke-linecap="round" stroke-linejoin="round" /><circle cx="18" cy="19.5" r="7" fill="#3b3b3b"/><path d="M18 15.8 V23.2 M14.3 19.5 H21.7" fill="none" stroke="#ffffff" stroke-width="1.8" stroke-linecap="round" stroke-linejoin="round" /></svg><div class="r" style="left:431.6px;top:106px;width:29.1px;height:25.7px;background:#e4e4e4;border-radius:5px;"></div><svg class="r" style="left:433px;top:107px;" width="26" height="26" viewBox="0 0 26 26"><path d="M20.5 8.5 A8.6 8.6 0 1 0 21.6 14" fill="none" stroke="#3b3b3b" stroke-width="1.8" stroke-linecap="round" stroke-linejoin="round" /><path d="M21.2 3.5 V8.8 H15.8" fill="none" stroke="#3b3b3b" stroke-width="1.8" stroke-linecap="round" stroke-linejoin="round" /></svg><svg class="r" style="left:468px;top:106px;" width="26" height="28" viewBox="0 0 26 28"><path d="M5.5 4.4 H17.6 Q20 4.4 20 6.8 V19.3 Q20 21.7 17.6 21.7 H5.5 Q3.1 21.7 3.1 19.3 V6.8 Q3.1 4.4 5.5 4.4 Z M7.3 13 H15.8" fill="none" stroke="#3b3b3b" stroke-width="1.8" stroke-linecap="round" stroke-linejoin="round" /><path d="M23.3 8.5 V21.5 Q23.3 25 19.8 25 H7" fill="none" stroke="#3b3b3b" stroke-width="1.8" stroke-linecap="round" stroke-linejoin="round" /></svg><svg class="r" style="left:93.5px;top:144.9px;" width="14" height="17" viewBox="0 0 14 17"><path d="M2.1 0.9 L10.6 8.1 L2.1 15.3" fill="none" stroke="#424242" stroke-width="1.5" stroke-linecap="round" stroke-linejoin="round" /></svg><svg class="r" style="left:93.5px;top:177.455px;" width="14" height="17" viewBox="0 0 14 17"><path d="M2.1 0.9 L10.6 8.1 L2.1 15.3" fill="none" stroke="#424242" stroke-width="1.5" stroke-linecap="round" stroke-linejoin="round" /></svg><svg class="r" style="left:93.5px;top:210.01px;" width="14" height="17" viewBox="0 0 14 17"><path d="M2.1 0.9 L10.6 8.1 L2.1 15.3" fill="none" stroke="#424242" stroke-width="1.5" stroke-linecap="round" stroke-linejoin="round" /></svg><svg class="r" style="left:93.5px;top:242.565px;" width="14" height="17" viewBox="0 0 14 17"><path d="M2.1 0.9 L10.6 8.1 L2.1 15.3" fill="none" stroke="#424242" stroke-width="1.5" stroke-linecap="round" stroke-linejoin="round" /></svg><svg class="r" style="left:93.5px;top:275.12px;" width="14" height="17" viewBox="0 0 14 17"><path d="M2.1 0.9 L10.6 8.1 L2.1 15.3" fill="none" stroke="#424242" stroke-width="1.5" stroke-linecap="round" stroke-linejoin="round" /></svg><svg class="r" style="left:93.5px;top:307.675px;" width="14" height="17" viewBox="0 0 14 17"><path d="M2.1 0.9 L10.6 8.1 L2.1 15.3" fill="none" stroke="#424242" stroke-width="1.5" stroke-linecap="round" stroke-linejoin="round" /></svg><svg class="r" style="left:93.5px;top:340.23px;" width="14" height="17" viewBox="0 0 14 17"><path d="M2.1 0.9 L10.6 8.1 L2.1 15.3" fill="none" stroke="#424242" stroke-width="1.5" stroke-linecap="round" stroke-linejoin="round" /></svg><svg class="r" style="left:91.0px;top:374.28499999999997px;" width="18" height="13" viewBox="0 0 18 13"><path d="M2 2.7 L9 10.2 L16 2.7" fill="none" stroke="#424242" stroke-width="1.6" stroke-linecap="round" stroke-linejoin="round" /></svg><svg class="r" style="left:105.5px;top:405.34000000000003px;" width="14" height="17" viewBox="0 0 14 17"><path d="M2.1 0.9 L10.6 8.1 L2.1 15.3" fill="none" stroke="#424242" stroke-width="1.5" stroke-linecap="round" stroke-linejoin="round" /></svg><svg class="r" style="left:105.5px;top:437.895px;" width="14" height="17" viewBox="0 0 14 17"><path d="M2.1 0.9 L10.6 8.1 L2.1 15.3" fill="none" stroke="#424242" stroke-width="1.5" stroke-linecap="round" stroke-linejoin="round" /></svg><svg class="r" style="left:103.0px;top:471.95000000000005px;" width="18" height="13" viewBox="0 0 18 13"><path d="M2 2.7 L9 10.2 L16 2.7" fill="none" stroke="#424242" stroke-width="1.6" stroke-linecap="round" stroke-linejoin="round" /></svg><svg class="r" style="left:117.5px;top:503.005px;" width="14" height="17" viewBox="0 0 14 17"><path d="M2.1 0.9 L10.6 8.1 L2.1 15.3" fill="none" stroke="#424242" stroke-width="1.5" stroke-linecap="round" stroke-linejoin="round" /></svg><svg class="r" style="left:105.5px;top:698.3349999999999px;" width="14" height="17" viewBox="0 0 14 17"><path d="M2.1 0.9 L10.6 8.1 L2.1 15.3" fill="none" stroke="#424242" stroke-width="1.5" stroke-linecap="round" stroke-linejoin="round" /></svg><div class="r" style="left:107px;top:495.2px;width:1px;height:194px;background:#c8c8c8;"></div><svg class="r" style="left:113px;top:535.3599999999999px;" width="16" height="16" viewBox="0 0 16 16"><g fill="#3d84ab"><path d="M5.6 0.6 H10.3 Q12.2 0.6 12.2 2.5 V5.7 Q12.2 7.4 10.4 7.4 H5.7 Q3.7 7.4 3.7 9.4 V11.5 H2.5 Q0.7 11.5 0.7 9.4 V6.3 Q0.7 4.3 2.7 4.3 H8.7 V3.6 H4.3 V1.9 Q4.3 0.6 5.6 0.6 Z"/><path d="M5.6 0.6 H10.3 Q12.2 0.6 12.2 2.5 V5.7 Q12.2 7.4 10.4 7.4 H5.7 Q3.7 7.4 3.7 9.4 V11.5 H2.5 Q0.7 11.5 0.7 9.4 V6.3 Q0.7 4.3 2.7 4.3 H8.7 V3.6 H4.3 V1.9 Q4.3 0.6 5.6 0.6 Z" transform="rotate(180 8 8)"/></g><circle cx="6.1" cy="2.1" r="0.8" fill="#f8f8f8"/><circle cx="9.9" cy="13.9" r="0.8" fill="#f8f8f8"/></svg><svg class="r" style="left:113px;top:567.915px;" width="16" height="16" viewBox="0 0 16 16"><g fill="#3d84ab"><path d="M5.6 0.6 H10.3 Q12.2 0.6 12.2 2.5 V5.7 Q12.2 7.4 10.4 7.4 H5.7 Q3.7 7.4 3.7 9.4 V11.5 H2.5 Q0.7 11.5 0.7 9.4 V6.3 Q0.7 4.3 2.7 4.3 H8.7 V3.6 H4.3 V1.9 Q4.3 0.6 5.6 0.6 Z"/><path d="M5.6 0.6 H10.3 Q12.2 0.6 12.2 2.5 V5.7 Q12.2 7.4 10.4 7.4 H5.7 Q3.7 7.4 3.7 9.4 V11.5 H2.5 Q0.7 11.5 0.7 9.4 V6.3 Q0.7 4.3 2.7 4.3 H8.7 V3.6 H4.3 V1.9 Q4.3 0.6 5.6 0.6 Z" transform="rotate(180 8 8)"/></g><circle cx="6.1" cy="2.1" r="0.8" fill="#f8f8f8"/><circle cx="9.9" cy="13.9" r="0.8" fill="#f8f8f8"/></svg><svg class="r" style="left:113px;top:600.4699999999999px;" width="16" height="16" viewBox="0 0 16 16"><g fill="#3d84ab"><path d="M5.6 0.6 H10.3 Q12.2 0.6 12.2 2.5 V5.7 Q12.2 7.4 10.4 7.4 H5.7 Q3.7 7.4 3.7 9.4 V11.5 H2.5 Q0.7 11.5 0.7 9.4 V6.3 Q0.7 4.3 2.7 4.3 H8.7 V3.6 H4.3 V1.9 Q4.3 0.6 5.6 0.6 Z"/><path d="M5.6 0.6 H10.3 Q12.2 0.6 12.2 2.5 V5.7 Q12.2 7.4 10.4 7.4 H5.7 Q3.7 7.4 3.7 9.4 V11.5 H2.5 Q0.7 11.5 0.7 9.4 V6.3 Q0.7 4.3 2.7 4.3 H8.7 V3.6 H4.3 V1.9 Q4.3 0.6 5.6 0.6 Z" transform="rotate(180 8 8)"/></g><circle cx="6.1" cy="2.1" r="0.8" fill="#f8f8f8"/><circle cx="9.9" cy="13.9" r="0.8" fill="#f8f8f8"/></svg><svg class="r" style="left:113px;top:633.025px;" width="16" height="16" viewBox="0 0 16 16"><g fill="#3d84ab"><path d="M5.6 0.6 H10.3 Q12.2 0.6 12.2 2.5 V5.7 Q12.2 7.4 10.4 7.4 H5.7 Q3.7 7.4 3.7 9.4 V11.5 H2.5 Q0.7 11.5 0.7 9.4 V6.3 Q0.7 4.3 2.7 4.3 H8.7 V3.6 H4.3 V1.9 Q4.3 0.6 5.6 0.6 Z"/><path d="M5.6 0.6 H10.3 Q12.2 0.6 12.2 2.5 V5.7 Q12.2 7.4 10.4 7.4 H5.7 Q3.7 7.4 3.7 9.4 V11.5 H2.5 Q0.7 11.5 0.7 9.4 V6.3 Q0.7 4.3 2.7 4.3 H8.7 V3.6 H4.3 V1.9 Q4.3 0.6 5.6 0.6 Z" transform="rotate(180 8 8)"/></g><circle cx="6.1" cy="2.1" r="0.8" fill="#f8f8f8"/><circle cx="9.9" cy="13.9" r="0.8" fill="#f8f8f8"/></svg><svg class="r" style="left:113px;top:665.5799999999999px;" width="16" height="16" viewBox="0 0 16 16"><g fill="#3d84ab"><path d="M5.6 0.6 H10.3 Q12.2 0.6 12.2 2.5 V5.7 Q12.2 7.4 10.4 7.4 H5.7 Q3.7 7.4 3.7 9.4 V11.5 H2.5 Q0.7 11.5 0.7 9.4 V6.3 Q0.7 4.3 2.7 4.3 H8.7 V3.6 H4.3 V1.9 Q4.3 0.6 5.6 0.6 Z"/><path d="M5.6 0.6 H10.3 Q12.2 0.6 12.2 2.5 V5.7 Q12.2 7.4 10.4 7.4 H5.7 Q3.7 7.4 3.7 9.4 V11.5 H2.5 Q0.7 11.5 0.7 9.4 V6.3 Q0.7 4.3 2.7 4.3 H8.7 V3.6 H4.3 V1.9 Q4.3 0.6 5.6 0.6 Z" transform="rotate(180 8 8)"/></g><circle cx="6.1" cy="2.1" r="0.8" fill="#f8f8f8"/><circle cx="9.9" cy="13.9" r="0.8" fill="#f8f8f8"/></svg><svg class="r" style="left:104px;top:732.39px;" width="16" height="16" viewBox="0 0 16 16"><path d="M2 2.5 H13 M2 6.2 H9 M2 9.9 H13 M2 13.6 H9" fill="none" stroke="#a0a0a0" stroke-width="1.5" stroke-linecap="round" stroke-linejoin="round" /></svg><svg class="r" style="left:104px;top:764.9449999999999px;" width="16" height="16" viewBox="0 0 16 16"><path d="M2 2.5 H13 M2 6.2 H9 M2 9.9 H13 M2 13.6 H9" fill="none" stroke="#a0a0a0" stroke-width="1.5" stroke-linecap="round" stroke-linejoin="round" /></svg><svg class="r" style="left:100.5px;top:795.0px;" width="17" height="17" viewBox="0 0 17 17"><path d="M16.56 9.99 L15.26 13.14 L12.63 12.28 L12.28 12.63 L13.14 15.26 L9.99 16.56 L8.74 14.09 L8.26 14.09 L7.01 16.56 L3.86 15.26 L4.72 12.63 L4.37 12.28 L1.74 13.14 L0.44 9.99 L2.91 8.74 L2.91 8.26 L0.44 7.01 L1.74 3.86 L4.37 4.72 L4.72 4.37 L3.86 1.74 L7.01 0.44 L8.26 2.91 L8.74 2.91 L9.99 0.44 L13.14 1.74 L12.28 4.37 L12.63 4.72 L15.26 3.86 L16.56 7.01 L14.09 8.26 L14.09 8.74 Z M8.5 5.8 A2.7 2.7 0 1 0 8.51 5.8 Z" fill="#616161" fill-rule="evenodd"/></svg><div class="r" style="left:477.0px;top:342.5px;width:11.2px;height:11.2px;border-radius:50%;background:#cdb98a"></div><div class="r" style="left:477.0px;top:375.4px;width:11.2px;height:11.2px;border-radius:50%;background:#cdb98a"></div><div class="r" style="left:477.0px;top:472.7px;width:11.2px;height:11.2px;border-radius:50%;background:#cdb98a"></div><svg class="r" style="left:79px;top:832px;" width="14" height="17" viewBox="0 0 14 17"><path d="M3.2 2.2 L11 8 L3.2 13.8" fill="none" stroke="#424242" stroke-width="1.6" stroke-linecap="round" stroke-linejoin="round" /></svg><svg class="r" style="left:76px;top:866px;" width="20" height="14" viewBox="0 0 20 14"><path d="M2.5 3.2 L9.5 10.5 L16.5 3.2" fill="none" stroke="#424242" stroke-width="1.7" stroke-linecap="round" stroke-linejoin="round" /></svg><svg class="r" style="left:86px;top:893px;" width="18" height="24" viewBox="0 0 18 24"><circle cx="8.7" cy="12.3" r="4.6" fill="none" stroke="#424242" stroke-width="1.8"/><path d="M8.7 2.5 V7.7 M8.7 16.9 V22" fill="none" stroke="#424242" stroke-width="1.8" stroke-linecap="round" stroke-linejoin="round" /></svg><div class="r" style="left:89.2px;top:931.3499999999999px;width:12px;height:12px;border-radius:50%;border:2.4px solid #3b3b3b;box-sizing:border-box"></div><div class="r" style="left:89.2px;top:963.9px;width:12px;height:12px;border-radius:50%;border:2.4px solid #3b3b3b;box-sizing:border-box"></div><div class="r" style="left:89.2px;top:996.4499999999999px;width:12px;height:12px;border-radius:50%;border:2.4px solid #3b3b3b;box-sizing:border-box"></div><div class="r" style="left:89.2px;top:1029.0px;width:12px;height:12px;border-radius:50%;border:2.4px solid #3b3b3b;box-sizing:border-box"></div><div class="r" style="left:89.2px;top:1061.55px;width:12px;height:12px;border-radius:50%;border:2.4px solid #3b3b3b;box-sizing:border-box"></div><div class="r" style="left:481px;top:954.5px;width:1px;height:32px;background:#d8d8d8;"></div><svg class="r" style="left:536.7px;top:70px;" width="16" height="16" viewBox="0 0 16 16"><g fill="#3d84ab"><path d="M5.6 0.6 H10.3 Q12.2 0.6 12.2 2.5 V5.7 Q12.2 7.4 10.4 7.4 H5.7 Q3.7 7.4 3.7 9.4 V11.5 H2.5 Q0.7 11.5 0.7 9.4 V6.3 Q0.7 4.3 2.7 4.3 H8.7 V3.6 H4.3 V1.9 Q4.3 0.6 5.6 0.6 Z"/><path d="M5.6 0.6 H10.3 Q12.2 0.6 12.2 2.5 V5.7 Q12.2 7.4 10.4 7.4 H5.7 Q3.7 7.4 3.7 9.4 V11.5 H2.5 Q0.7 11.5 0.7 9.4 V6.3 Q0.7 4.3 2.7 4.3 H8.7 V3.6 H4.3 V1.9 Q4.3 0.6 5.6 0.6 Z" transform="rotate(180 8 8)"/></g><circle cx="6.1" cy="2.1" r="0.8" fill="#f8f8f8"/><circle cx="9.9" cy="13.9" r="0.8" fill="#f8f8f8"/></svg><svg class="r" style="left:714.9px;top:70px;" width="16" height="16" viewBox="0 0 16 16"><g fill="#3d84ab"><path d="M5.6 0.6 H10.3 Q12.2 0.6 12.2 2.5 V5.7 Q12.2 7.4 10.4 7.4 H5.7 Q3.7 7.4 3.7 9.4 V11.5 H2.5 Q0.7 11.5 0.7 9.4 V6.3 Q0.7 4.3 2.7 4.3 H8.7 V3.6 H4.3 V1.9 Q4.3 0.6 5.6 0.6 Z"/><path d="M5.6 0.6 H10.3 Q12.2 0.6 12.2 2.5 V5.7 Q12.2 7.4 10.4 7.4 H5.7 Q3.7 7.4 3.7 9.4 V11.5 H2.5 Q0.7 11.5 0.7 9.4 V6.3 Q0.7 4.3 2.7 4.3 H8.7 V3.6 H4.3 V1.9 Q4.3 0.6 5.6 0.6 Z" transform="rotate(180 8 8)"/></g><circle cx="6.1" cy="2.1" r="0.8" fill="#f8f8f8"/><circle cx="9.9" cy="13.9" r="0.8" fill="#f8f8f8"/></svg><svg class="r" style="left:947.8px;top:70px;" width="16" height="16" viewBox="0 0 16 16"><g fill="#3d84ab"><path d="M5.6 0.6 H10.3 Q12.2 0.6 12.2 2.5 V5.7 Q12.2 7.4 10.4 7.4 H5.7 Q3.7 7.4 3.7 9.4 V11.5 H2.5 Q0.7 11.5 0.7 9.4 V6.3 Q0.7 4.3 2.7 4.3 H8.7 V3.6 H4.3 V1.9 Q4.3 0.6 5.6 0.6 Z"/><path d="M5.6 0.6 H10.3 Q12.2 0.6 12.2 2.5 V5.7 Q12.2 7.4 10.4 7.4 H5.7 Q3.7 7.4 3.7 9.4 V11.5 H2.5 Q0.7 11.5 0.7 9.4 V6.3 Q0.7 4.3 2.7 4.3 H8.7 V3.6 H4.3 V1.9 Q4.3 0.6 5.6 0.6 Z" transform="rotate(180 8 8)"/></g><circle cx="6.1" cy="2.1" r="0.8" fill="#f8f8f8"/><circle cx="9.9" cy="13.9" r="0.8" fill="#f8f8f8"/></svg><svg class="r" style="left:1311px;top:70px;" width="16" height="16" viewBox="0 0 16 16"><g fill="#3d84ab"><path d="M5.6 0.6 H10.3 Q12.2 0.6 12.2 2.5 V5.7 Q12.2 7.4 10.4 7.4 H5.7 Q3.7 7.4 3.7 9.4 V11.5 H2.5 Q0.7 11.5 0.7 9.4 V6.3 Q0.7 4.3 2.7 4.3 H8.7 V3.6 H4.3 V1.9 Q4.3 0.6 5.6 0.6 Z"/><path d="M5.6 0.6 H10.3 Q12.2 0.6 12.2 2.5 V5.7 Q12.2 7.4 10.4 7.4 H5.7 Q3.7 7.4 3.7 9.4 V11.5 H2.5 Q0.7 11.5 0.7 9.4 V6.3 Q0.7 4.3 2.7 4.3 H8.7 V3.6 H4.3 V1.9 Q4.3 0.6 5.6 0.6 Z" transform="rotate(180 8 8)"/></g><circle cx="6.1" cy="2.1" r="0.8" fill="#f8f8f8"/><circle cx="9.9" cy="13.9" r="0.8" fill="#f8f8f8"/></svg><svg class="r" style="left:1535px;top:70px;" width="16" height="16" viewBox="0 0 16 16"><g fill="#3d84ab"><path d="M5.6 0.6 H10.3 Q12.2 0.6 12.2 2.5 V5.7 Q12.2 7.4 10.4 7.4 H5.7 Q3.7 7.4 3.7 9.4 V11.5 H2.5 Q0.7 11.5 0.7 9.4 V6.3 Q0.7 4.3 2.7 4.3 H8.7 V3.6 H4.3 V1.9 Q4.3 0.6 5.6 0.6 Z"/><path d="M5.6 0.6 H10.3 Q12.2 0.6 12.2 2.5 V5.7 Q12.2 7.4 10.4 7.4 H5.7 Q3.7 7.4 3.7 9.4 V11.5 H2.5 Q0.7 11.5 0.7 9.4 V6.3 Q0.7 4.3 2.7 4.3 H8.7 V3.6 H4.3 V1.9 Q4.3 0.6 5.6 0.6 Z" transform="rotate(180 8 8)"/></g><circle cx="6.1" cy="2.1" r="0.8" fill="#f8f8f8"/><circle cx="9.9" cy="13.9" r="0.8" fill="#f8f8f8"/></svg><svg class="r" style="left:1482px;top:70px;" width="20" height="17" viewBox="0 0 20 17"><path d="M2.5 2.2 L16.5 15.5 M16.5 2.2 L2.5 15.5" fill="none" stroke="#424242" stroke-width="1.7" stroke-linecap="round" stroke-linejoin="round" /></svg><svg class="r" style="left:1643px;top:68px;" width="22" height="22" viewBox="0 0 22 22"><path d="M3 2.5 L18.5 10.5 L3 18.5 Z" fill="none" stroke="#3b3b3b" stroke-width="1.8" stroke-linecap="round" stroke-linejoin="round" /></svg><svg class="r" style="left:1669px;top:72px;" width="20" height="14" viewBox="0 0 20 14"><path d="M3 3.5 L9 9.5 L15 3.5" fill="none" stroke="#3b3b3b" stroke-width="1.6" stroke-linecap="round" stroke-linejoin="round" /></svg><svg class="r" style="left:1698px;top:66px;" width="26" height="25" viewBox="0 0 26 25"><rect x="2.2" y="2.2" width="20.5" height="19.5" rx="3" fill="none" stroke="#3b3b3b" stroke-width="1.9"/><path d="M2.2 12 H22.7" fill="none" stroke="#3b3b3b" stroke-width="1.9" stroke-linecap="round" stroke-linejoin="round" /></svg><svg class="r" style="left:1738px;top:70px;" width="24" height="16" viewBox="0 0 24 16"><circle cx="4.50" cy="8.2" r="1.6" fill="#424242"/><circle cx="10.80" cy="8.2" r="1.6" fill="#424242"/><circle cx="17.10" cy="8.2" r="1.6" fill="#424242"/></svg><svg class="r" style="left:594.5px;top:113px;" width="12" height="17" viewBox="0 0 12 17"><path d="M2.5 2.5 L8.5 8.5 L2.5 14.5" fill="none" stroke="#616161" stroke-width="1.5" stroke-linecap="round" stroke-linejoin="round" /></svg><svg class="r" style="left:643.5px;top:113px;" width="12" height="17" viewBox="0 0 12 17"><path d="M2.5 2.5 L8.5 8.5 L2.5 14.5" fill="none" stroke="#616161" stroke-width="1.5" stroke-linecap="round" stroke-linejoin="round" /></svg><svg class="r" style="left:816px;top:113px;" width="12" height="17" viewBox="0 0 12 17"><path d="M2.5 2.5 L8.5 8.5 L2.5 14.5" fill="none" stroke="#616161" stroke-width="1.5" stroke-linecap="round" stroke-linejoin="round" /></svg><svg class="r" style="left:665.8px;top:112.8px;" width="16" height="16" viewBox="0 0 16 16"><g fill="#3d84ab"><path d="M5.6 0.6 H10.3 Q12.2 0.6 12.2 2.5 V5.7 Q12.2 7.4 10.4 7.4 H5.7 Q3.7 7.4 3.7 9.4 V11.5 H2.5 Q0.7 11.5 0.7 9.4 V6.3 Q0.7 4.3 2.7 4.3 H8.7 V3.6 H4.3 V1.9 Q4.3 0.6 5.6 0.6 Z"/><path d="M5.6 0.6 H10.3 Q12.2 0.6 12.2 2.5 V5.7 Q12.2 7.4 10.4 7.4 H5.7 Q3.7 7.4 3.7 9.4 V11.5 H2.5 Q0.7 11.5 0.7 9.4 V6.3 Q0.7 4.3 2.7 4.3 H8.7 V3.6 H4.3 V1.9 Q4.3 0.6 5.6 0.6 Z" transform="rotate(180 8 8)"/></g><circle cx="6.1" cy="2.1" r="0.8" fill="#ffffff"/><circle cx="9.9" cy="13.9" r="0.8" fill="#ffffff"/></svg><svg class="r" style="left:1582px;top:878px;" width="26" height="26" viewBox="0 0 26 26"><rect x="2.5" y="2.5" width="20.5" height="20.5" rx="3.5" fill="none" stroke="#3b3b3b" stroke-width="1.9"/><path d="M12.7 2.5 V23" fill="none" stroke="#3b3b3b" stroke-width="1.9" stroke-linecap="round" stroke-linejoin="round" /></svg><svg class="r" style="left:1611px;top:884px;" width="16" height="14" viewBox="0 0 16 14"><path d="M2.5 4 L8 9.5 L13.5 4" fill="none" stroke="#3b3b3b" stroke-width="1.6" stroke-linecap="round" stroke-linejoin="round" /></svg><svg class="r" style="left:1642px;top:883px;" width="24" height="16" viewBox="0 0 24 16"><circle cx="4.40" cy="8.2" r="1.6" fill="#424242"/><circle cx="10.70" cy="8.2" r="1.6" fill="#424242"/><circle cx="17.00" cy="8.2" r="1.6" fill="#424242"/></svg><div class="r" style="left:1681.5px;top:878.8px;width:1px;height:24px;background:#c8c8c8;"></div><svg class="r" style="left:1699px;top:879px;" width="24" height="24" viewBox="0 0 24 24"><path d="M3 8 V4.5 Q3 3 4.5 3 H8 M16 3 H19.5 Q21 3 21 4.5 V8 M21 16 V19.5 Q21 21 19.5 21 H16 M8 21 H4.5 Q3 21 3 19.5 V16" fill="none" stroke="#3b3b3b" stroke-width="1.9" stroke-linecap="round" stroke-linejoin="round" /></svg><svg class="r" style="left:1740px;top:881px;" width="20" height="19" viewBox="0 0 20 19"><path d="M2.3 2.3 L16.5 16.5 M16.5 2.3 L2.3 16.5" fill="none" stroke="#3b3b3b" stroke-width="1.7" stroke-linecap="round" stroke-linejoin="round" /></svg><svg class="r" style="left:1612px;top:921px;" width="22" height="23" viewBox="0 0 22 23"><path d="M11 1.5 L19.5 6.4 V16.3 L11 21.2 L2.5 16.3 V6.4 Z" fill="none" stroke="#9a9a9a" stroke-width="1"/><path d="M19.5 6.4 V16.3 L11 21.2 V11.3 Z" fill="#3b3b3b"/><path d="M12.2 17.5 H15" stroke="#ffffff" stroke-width="1"/><text x="12.3" y="16.6" font-size="6" fill="#ffffff" font-family="Liberation Sans">$</text></svg><svg class="r" style="left:1612px;top:954px;" width="22" height="23" viewBox="0 0 22 23"><path d="M11 1.5 L19.5 6.4 V16.3 L11 21.2 L2.5 16.3 V6.4 Z" fill="none" stroke="#9a9a9a" stroke-width="1"/><path d="M19.5 6.4 V16.3 L11 21.2 V11.3 Z" fill="#3b3b3b"/><path d="M12.2 17.5 H15" stroke="#ffffff" stroke-width="1"/><text x="12.3" y="16.6" font-size="6" fill="#ffffff" font-family="Liberation Sans">$</text></svg><svg class="r" style="left:1612px;top:987px;" width="22" height="23" viewBox="0 0 22 23"><path d="M11 1.5 L19.5 6.4 V16.3 L11 21.2 L2.5 16.3 V6.4 Z" fill="none" stroke="#9a9a9a" stroke-width="1"/><path d="M19.5 6.4 V16.3 L11 21.2 V11.3 Z" fill="#3b3b3b"/><path d="M12.2 17.5 H15" stroke="#ffffff" stroke-width="1"/><text x="12.3" y="16.6" font-size="6" fill="#ffffff" font-family="Liberation Sans">$</text></svg><svg class="r" style="left:1744px;top:921px;" width="26" height="22" viewBox="0 0 26 22"><path d="M13 2.5 L23.5 20 H2.5 Z M13 8 V13.5" fill="none" stroke="#a27d3a" stroke-width="1.7" stroke-linecap="round" stroke-linejoin="round" /><circle cx="13" cy="16.8" r="1.2" fill="#a27d3a"/></svg><svg class="r" style="left:1744px;top:954px;" width="26" height="22" viewBox="0 0 26 22"><path d="M13 2.5 L23.5 20 H2.5 Z M13 8 V13.5" fill="none" stroke="#a27d3a" stroke-width="1.7" stroke-linecap="round" stroke-linejoin="round" /><circle cx="13" cy="16.8" r="1.2" fill="#a27d3a"/></svg><svg class="r" style="left:14px;top:1098px;" width="22" height="24" viewBox="0 0 22 24"><path d="M2.2 21.7 L9.9 15 L2.2 8.3 M17.6 2.2 L10.9 8.9 L17.6 15.7" fill="none" stroke="#ffffff" stroke-width="1.7" stroke-linecap="round" stroke-linejoin="round" /></svg><svg class="r" style="left:416px;top:1097px;" width="32" height="28" viewBox="0 0 32 28"><circle cx="9.5" cy="4.9" r="3" fill="none" stroke="#3b3b3b" stroke-width="1.6"/><circle cx="9.2" cy="22.1" r="3" fill="none" stroke="#3b3b3b" stroke-width="1.6"/><path d="M8.7 8 V19" fill="none" stroke="#3b3b3b" stroke-width="1.6" stroke-linecap="round" stroke-linejoin="round" /><path d="M16 12 V8.5 Q16 4.9 19.7 4.9 Q23.3 4.9 23.3 8.5 V11" fill="none" stroke="#3b3b3b" stroke-width="1.6" stroke-linecap="round" stroke-linejoin="round" /><circle cx="20" cy="18" r="7.2" fill="#3b3b3b"/><path d="M20 13.8 V22.2 M16.4 15.9 L23.6 20.1 M23.6 15.9 L16.4 20.1" fill="none" stroke="#ffffff" stroke-width="1.5" stroke-linecap="round" stroke-linejoin="round" /></svg><svg class="r" style="left:490px;top:1097px;" width="32" height="28" viewBox="0 0 32 28"><path d="M17 18.2 H7 Q2.5 18.2 2.5 14 Q2.5 10 6.5 9.8 Q7.5 5 12 5 Q16.8 5 17.6 10" fill="none" stroke="#3b3b3b" stroke-width="1.6" stroke-linecap="round" stroke-linejoin="round" /><circle cx="18.2" cy="19.3" r="7.5" fill="#3b3b3b"/><path d="M18.2 23.8 V15.5 M14.8 18.5 L18.2 15.2 L21.6 18.5" fill="none" stroke="#ffffff" stroke-width="1.6" stroke-linecap="round" stroke-linejoin="round" /></svg><svg class="r" style="left:540px;top:1098px;" width="23" height="23" viewBox="0 0 23 23"><circle cx="11.5" cy="11.9" r="9.6" fill="none" stroke="#3b3b3b" stroke-width="1.6"/><path d="M7.6 8 L15.4 15.8 M15.4 8 L7.6 15.8" fill="none" stroke="#3b3b3b" stroke-width="1.6" stroke-linecap="round" stroke-linejoin="round" /></svg><svg class="r" style="left:582px;top:1098px;" width="24" height="22" viewBox="0 0 24 22"><path d="M12 2.5 L22.5 20.6 H1.5 Z M12 8.5 V14.8" fill="none" stroke="#3b3b3b" stroke-width="1.6" stroke-linecap="round" stroke-linejoin="round" /><circle cx="12" cy="17.6" r="1.1" fill="#3b3b3b"/></svg><svg class="r" style="left:626px;top:1098px;" width="23" height="23" viewBox="0 0 23 23"><circle cx="11.3" cy="11.9" r="9.6" fill="none" stroke="#3b3b3b" stroke-width="1.6"/><path d="M11.3 10.2 V16.5" fill="none" stroke="#3b3b3b" stroke-width="1.8" stroke-linecap="round" stroke-linejoin="round" /><circle cx="11.3" cy="7" r="1.2" fill="#3b3b3b"/></svg><svg class="r" style="left:698px;top:1098px;" width="22" height="22" viewBox="0 0 22 22"><path d="M4 2.5 Q0.5 8 4 13.5 M18 2.5 Q21.5 8 18 13.5 M7.3 5 Q5.5 8 7.3 11 M14.7 5 Q16.5 8 14.7 11 M6.5 20.7 L11 9.5 L15.5 20.7 M8.6 15.5 H13.4" fill="none" stroke="#3b3b3b" stroke-width="1.6" stroke-linecap="round" stroke-linejoin="round" /><circle cx="11" cy="8.2" r="1.9" fill="none" stroke="#3b3b3b" stroke-width="1.5"/></svg><svg class="r" style="left:959px;top:1098px;" width="16" height="24" viewBox="0 0 16 24"><circle cx="8" cy="12.1" r="4.6" fill="none" stroke="#3b3b3b" stroke-width="1.7"/><path d="M8 1.8 V7.5 M8 16.7 V21.8" fill="none" stroke="#3b3b3b" stroke-width="1.7" stroke-linecap="round" stroke-linejoin="round" /></svg><svg class="r" style="left:1573px;top:1099px;" width="26" height="22" viewBox="0 0 26 22"><path d="M6.5 1.5 Q2 1.5 2 6 V9 Q1 10 1 12 V15 Q1 20.5 12.7 20.5 Q24.5 20.5 24.5 15 V12 Q24.5 10 23.5 9 V6 Q23.5 1.5 19 1.5 Q15 1.5 12.7 4.3 Q10.5 1.5 6.5 1.5 Z" fill="#3b3b3b"/><path d="M6.8 4.2 Q4.5 4.2 4.5 6.5 V8.6 Q4.5 10.7 7 10.7 Q10.6 10.7 11 8 Q11.3 4.2 6.8 4.2 Z M18.7 4.2 Q21 4.2 21 6.5 V8.6 Q21 10.7 18.5 10.7 Q14.9 10.7 14.5 8 Q14.2 4.2 18.7 4.2 Z M4 13 Q12.7 17 21.5 13 V16 Q12.7 19.5 4 16 Z" fill="#f8f8f8"/><rect x="9" y="13.5" width="1.8" height="3" fill="#3b3b3b"/><rect x="14.7" y="13.5" width="1.8" height="3" fill="#3b3b3b"/></svg><svg class="r" style="left:1748px;top:1098px;" width="22" height="24" viewBox="0 0 22 24"><path d="M11 3 Q4.5 3 4.5 10 V15.5 L2.5 18.5 H19.5 L17.5 15.5 V10 Q17.5 3 11 3 Z M8.3 20.8 Q11 23 13.7 20.8" fill="none" stroke="#3b3b3b" stroke-width="1.6" stroke-linecap="round" stroke-linejoin="round" /></svg><div class="r" style="left:370.5px;top:138.9px;width:153px;height:36.3px;background:#f8f8f8;border:1px solid #c8c8c8;border-radius:6px;box-sizing:border-box;box-shadow:0 2px 8px rgba(0,0,0,0.16);"></div><svg class="r" style="left:439px;top:133px;" width="13" height="7" viewBox="0 0 13 7"><path d="M1 6.5 L6.5 1 L12 6.5" fill="#f8f8f8" stroke="#c8c8c8" stroke-width="1"/><rect x="0" y="6" width="13" height="1.5" fill="#f8f8f8"/></svg><div class="t" style="left:382.51px;top:148.46px;font-size:18px;line-height:18px;color:#3b3b3b;transform:scaleX(0.9446);transform-origin:0 0;">Refresh Explorer</div><div class="r" style="left:421px;top:99px;width:55px;height:39px;background:transparent;border:5px solid #c00000;box-sizing:border-box;"></div><div class="r" style="left:93.8px;top:526.2px;width:216.2px;height:40px;background:transparent;border:5px solid #c00000;box-sizing:border-box;"></div><div class="r" style="left:398px;top:1088px;width:138px;height:40px;background:transparent;border:5px solid #c00000;box-sizing:border-box;"></div></body></html>
